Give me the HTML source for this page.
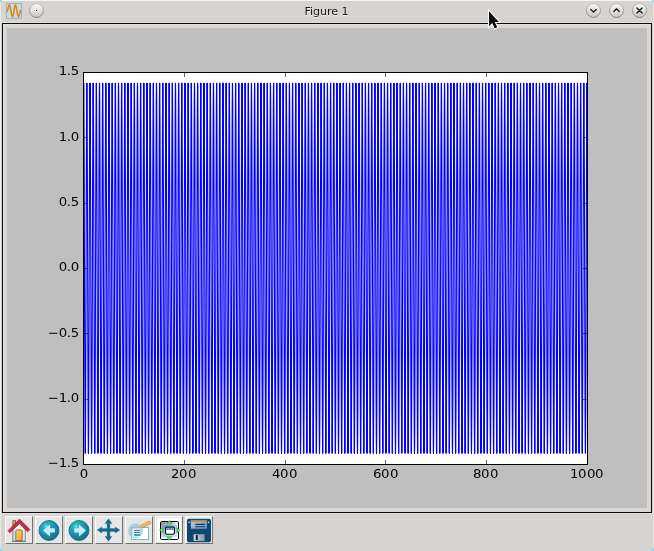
<!DOCTYPE html>
<html><head><meta charset="utf-8"><title>Figure 1</title>
<style>
html,body{margin:0;padding:0}
body{width:654px;height:551px;overflow:hidden;background:#d7d3d0;position:relative;font-family:"DejaVu Sans","Liberation Sans",sans-serif}
.abs{position:absolute}
#title{left:0;top:0;width:654px;height:23px;text-align:center;font-size:10.67px;line-height:23px;color:#1a1a1a;text-shadow:0 1px 0 #f4f3f2}
#frame{left:2px;top:23px;width:648px;height:488px;border:1px solid #0c0a0a;background:#d9d6d3}
#canvas{left:7px;top:28px;width:640px;height:480px;background:#bfbfbf}
.btn{position:absolute;top:516px;width:26px;height:26px;background:#e6e6e6;border-top:1px solid #fff;border-left:1px solid #fff;border-right:1px solid #747270;border-bottom:1px solid #747270}
svg{position:absolute;left:0;top:0;will-change:transform;transform:translateZ(0)}
svg text{font-family:"DejaVu Sans","Liberation Sans",sans-serif;font-size:13.33px;fill:#000}
</style></head><body>
<div class="abs" style="left:0;top:0;width:654px;height:1px;background:#f6f5f4"></div>
<div class="abs" style="left:0;top:0;width:1px;height:551px;background:#eceae8"></div>
<div class="abs" style="left:653px;top:0;width:1px;height:551px;background:#e8e5e3"></div>
<div class="abs" style="left:0;top:22px;width:654px;height:1px;background:#e2dfdd"></div>
<div id="frame" class="abs"></div>
<div class="abs" style="left:3px;top:24px;width:648px;height:1px;background:#e3e1df"></div>
<div class="abs" style="left:3px;top:24px;width:1px;height:488px;background:#e3e1df"></div>
<div id="canvas" class="abs"></div>
<div class="abs" style="left:0;top:513px;width:654px;height:1px;background:#e2dfdd"></div>
<div class="btn" style="left:5px"></div>
<div class="btn" style="left:35px"></div>
<div class="btn" style="left:65px"></div>
<div class="btn" style="left:95px"></div>
<div class="btn" style="left:125px"></div>
<div class="btn" style="left:155px"></div>
<div class="btn" style="left:185px"></div>
<svg width="654" height="551" viewBox="0 0 654 551">
<defs>
<clipPath id="axclip"><rect x="83.5" y="72.5" width="504" height="392"/></clipPath>
<linearGradient id="bg1" x1="0" y1="0" x2="0" y2="1"><stop offset="0" stop-color="#faf9f8"/><stop offset="0.5" stop-color="#e4e2e0"/><stop offset="1" stop-color="#c6c3c0"/></linearGradient>
<linearGradient id="bg2" x1="0" y1="0" x2="0" y2="1"><stop offset="0" stop-color="#bcb9b6"/><stop offset="1" stop-color="#7c7976"/></linearGradient>
</defs>
<!-- axes -->
<rect x="83.5" y="72.5" width="504" height="392" fill="#fff"/>
<g clip-path="url(#axclip)" style="isolation:isolate" fill="none" stroke="#0000ff" stroke-width="1.11" stroke-linecap="round" stroke-linejoin="round"><path d="M83.68 83.3L83.80 87.9L83.91 101.6L84.02 123.6L84.14 152.9L84.25 187.9L84.36 227.0L84.48 268.2L84.59 309.3L84.70 348.4L84.82 383.4L84.93 412.7L85.04 434.7L85.15 448.4L85.27 453.0M86.85 83.3L86.96 87.9L87.08 101.6L87.19 123.6L87.30 152.9L87.42 187.9L87.53 227.0L87.64 268.2L87.75 309.3L87.87 348.4L87.98 383.4L88.09 412.7L88.21 434.7L88.32 448.4L88.43 453.0M90.02 83.3L90.13 87.9L90.24 101.6L90.35 123.6L90.47 152.9L90.58 187.9L90.69 227.0L90.81 268.1L90.92 309.3L91.03 348.4L91.15 383.4L91.26 412.7L91.37 434.7L91.49 448.4L91.60 453.0M93.18 83.3L93.29 87.9L93.41 101.6L93.52 123.6L93.63 152.9L93.75 187.9L93.86 227.0L93.97 268.2L94.09 309.3L94.20 348.4L94.31 383.4L94.42 412.7L94.54 434.7L94.65 448.4L94.76 453.0M96.35 83.3L96.46 87.9L96.57 101.6L96.69 123.6L96.80 152.9L96.91 187.9L97.02 227.0L97.14 268.1L97.25 309.3L97.36 348.4L97.48 383.4L97.59 412.7L97.70 434.7L97.82 448.4L97.93 453.0M99.51 83.3L99.63 87.9L99.74 101.6L99.85 123.6L99.96 152.9L100.08 187.9L100.19 227.0L100.30 268.2L100.42 309.3L100.53 348.4L100.64 383.4L100.76 412.7L100.87 434.7L100.98 448.4L101.09 453.0M102.68 83.3L102.79 87.9L102.90 101.6L103.02 123.6L103.13 152.9L103.24 187.9L103.36 227.0L103.47 268.2L103.58 309.3L103.69 348.4L103.81 383.4L103.92 412.7L104.03 434.7L104.15 448.4L104.26 453.0M105.84 83.3L105.96 87.9L106.07 101.6L106.18 123.6L106.30 152.9L106.41 187.9L106.52 227.0L106.63 268.1L106.75 309.3L106.86 348.4L106.97 383.4L107.09 412.7L107.20 434.7L107.31 448.4L107.43 453.0M109.01 83.3L109.12 87.9L109.23 101.6L109.35 123.6L109.46 152.9L109.57 187.9L109.69 227.0L109.80 268.2L109.91 309.3L110.03 348.4L110.14 383.4L110.25 412.7L110.37 434.7L110.48 448.4L110.59 453.0M112.17 83.3L112.29 87.9L112.40 101.6L112.51 123.6L112.63 152.9L112.74 187.9L112.85 227.0L112.97 268.1L113.08 309.3L113.19 348.4L113.30 383.4L113.42 412.7L113.53 434.7L113.64 448.4L113.76 453.0M115.34 83.3L115.45 87.9L115.57 101.6L115.68 123.6L115.79 152.9L115.90 187.9L116.02 227.0L116.13 268.2L116.24 309.3L116.36 348.4L116.47 383.4L116.58 412.7L116.70 434.7L116.81 448.4L116.92 453.0M118.50 83.3L118.62 87.9L118.73 101.6L118.84 123.6L118.96 152.9L119.07 187.9L119.18 227.0L119.30 268.2L119.41 309.3L119.52 348.4L119.64 383.4L119.75 412.7L119.86 434.7L119.97 448.4L120.09 453.0M121.67 83.3L121.78 87.9L121.90 101.6L122.01 123.6L122.12 152.9L122.24 187.9L122.35 227.0L122.46 268.2L122.57 309.3L122.69 348.4L122.80 383.4L122.91 412.7L123.03 434.7L123.14 448.4L123.25 453.0M124.84 83.3L124.95 87.9L125.06 101.6L125.18 123.6L125.29 152.9L125.40 187.9L125.51 227.0L125.63 268.2L125.74 309.3L125.85 348.4L125.97 383.4L126.08 412.7L126.19 434.7L126.31 448.4L126.42 453.0M128.00 83.3L128.11 87.9L128.23 101.6L128.34 123.6L128.45 152.9L128.57 187.9L128.68 227.0L128.79 268.1L128.91 309.3L129.02 348.4L129.13 383.4L129.25 412.7L129.36 434.7L129.47 448.4L129.58 453.0M131.17 83.3L131.28 87.9L131.39 101.6L131.51 123.6L131.62 152.9L131.73 187.9L131.85 227.0L131.96 268.1L132.07 309.3L132.18 348.4L132.30 383.4L132.41 412.7L132.52 434.7L132.64 448.4L132.75 453.0M134.33 83.3L134.45 87.9L134.56 101.6L134.67 123.6L134.78 152.9L134.90 187.9L135.01 227.0L135.12 268.1L135.24 309.3L135.35 348.4L135.46 383.4L135.58 412.7L135.69 434.7L135.80 448.4L135.92 453.0M137.50 83.3L137.61 87.9L137.72 101.6L137.84 123.6L137.95 152.9L138.06 187.9L138.18 227.0L138.29 268.1L138.40 309.3L138.52 348.4L138.63 383.4L138.74 412.7L138.85 434.7L138.97 448.4L139.08 453.0M140.66 83.3L140.78 87.9L140.89 101.6L141.00 123.6L141.12 152.9L141.23 187.9L141.34 227.0L141.45 268.1L141.57 309.3L141.68 348.4L141.79 383.4L141.91 412.7L142.02 434.7L142.13 448.4L142.25 453.0M143.83 83.3L143.94 87.9L144.06 101.6L144.17 123.6L144.28 152.9L144.39 187.9L144.51 227.0L144.62 268.1L144.73 309.3L144.85 348.4L144.96 383.4L145.07 412.7L145.19 434.7L145.30 448.4L145.41 453.0M146.99 83.3L147.11 87.9L147.22 101.6L147.33 123.6L147.45 152.9L147.56 187.9L147.67 227.0L147.79 268.1L147.90 309.3L148.01 348.4L148.13 383.4L148.24 412.7L148.35 434.7L148.46 448.4L148.58 453.0M150.16 83.3L150.27 87.9L150.39 101.6L150.50 123.6L150.61 152.9L150.73 187.9L150.84 227.0L150.95 268.1L151.06 309.3L151.18 348.4L151.29 383.4L151.40 412.7L151.52 434.7L151.63 448.4L151.74 453.0M153.33 83.3L153.44 87.9L153.55 101.6L153.66 123.6L153.78 152.9L153.89 187.9L154.00 227.0L154.12 268.1L154.23 309.3L154.34 348.4L154.46 383.4L154.57 412.7L154.68 434.7L154.80 448.4L154.91 453.0M156.49 83.3L156.60 87.9L156.72 101.6L156.83 123.6L156.94 152.9L157.06 187.9L157.17 227.0L157.28 268.1L157.40 309.3L157.51 348.4L157.62 383.4L157.73 412.7L157.85 434.7L157.96 448.4L158.07 453.0M159.66 83.3L159.77 87.9L159.88 101.6L160.00 123.6L160.11 152.9L160.22 187.9L160.33 227.0L160.45 268.1L160.56 309.3L160.67 348.4L160.79 383.4L160.90 412.7L161.01 434.7L161.13 448.4L161.24 453.0M162.82 83.3L162.94 87.9L163.05 101.6L163.16 123.6L163.27 152.9L163.39 187.9L163.50 227.0L163.61 268.1L163.73 309.3L163.84 348.4L163.95 383.4L164.07 412.7L164.18 434.7L164.29 448.4L164.40 453.0M165.99 83.3L166.10 87.9L166.21 101.6L166.33 123.6L166.44 152.9L166.55 187.9L166.67 227.0L166.78 268.1L166.89 309.3L167.00 348.4L167.12 383.4L167.23 412.7L167.34 434.7L167.46 448.4L167.57 453.0M169.15 83.3L169.27 87.9L169.38 101.6L169.49 123.6L169.61 152.9L169.72 187.9L169.83 227.0L169.94 268.2L170.06 309.3L170.17 348.4L170.28 383.4L170.40 412.7L170.51 434.7L170.62 448.4L170.74 453.0M172.32 83.3L172.43 87.9L172.54 101.6L172.66 123.6L172.77 152.9L172.88 187.9L173.00 227.0L173.11 268.1L173.22 309.3L173.34 348.4L173.45 383.4L173.56 412.7L173.68 434.7L173.79 448.4L173.90 453.0M175.48 83.3L175.60 87.9L175.71 101.6L175.82 123.6L175.94 152.9L176.05 187.9L176.16 227.0L176.28 268.1L176.39 309.3L176.50 348.4L176.61 383.4L176.73 412.7L176.84 434.7L176.95 448.4L177.07 453.0M178.65 83.3L178.76 87.9L178.88 101.6L178.99 123.6L179.10 152.9L179.21 187.9L179.33 227.0L179.44 268.1L179.55 309.3L179.67 348.4L179.78 383.4L179.89 412.7L180.01 434.7L180.12 448.4L180.23 453.0M181.81 83.3L181.93 87.9L182.04 101.6L182.15 123.6L182.27 152.9L182.38 187.9L182.49 227.0L182.61 268.1L182.72 309.3L182.83 348.4L182.95 383.4L183.06 412.7L183.17 434.7L183.28 448.4L183.40 453.0M184.98 83.3L185.09 87.9L185.21 101.6L185.32 123.6L185.43 152.9L185.55 187.9L185.66 227.0L185.77 268.2L185.88 309.3L186.00 348.4L186.11 383.4L186.22 412.7L186.34 434.7L186.45 448.4L186.56 453.0M188.15 83.3L188.26 87.9L188.37 101.6L188.49 123.6L188.60 152.9L188.71 187.9L188.82 227.0L188.94 268.2L189.05 309.3L189.16 348.4L189.28 383.4L189.39 412.7L189.50 434.7L189.62 448.4L189.73 453.0M191.31 83.3L191.42 87.9L191.54 101.6L191.65 123.6L191.76 152.9L191.88 187.9L191.99 227.0L192.10 268.1L192.22 309.3L192.33 348.4L192.44 383.4L192.56 412.7L192.67 434.7L192.78 448.4L192.89 453.0M194.48 83.3L194.59 87.9L194.70 101.6L194.82 123.6L194.93 152.9L195.04 187.9L195.16 227.0L195.27 268.1L195.38 309.3L195.49 348.4L195.61 383.4L195.72 412.7L195.83 434.7L195.95 448.4L196.06 453.0M197.64 83.3L197.76 87.9L197.87 101.6L197.98 123.6L198.09 152.9L198.21 187.9L198.32 227.0L198.43 268.1L198.55 309.3L198.66 348.4L198.77 383.4L198.89 412.7L199.00 434.7L199.11 448.4L199.23 453.0M200.81 83.3L200.92 87.9L201.03 101.6L201.15 123.6L201.26 152.9L201.37 187.9L201.49 227.0L201.60 268.1L201.71 309.3L201.83 348.4L201.94 383.4L202.05 412.7L202.16 434.7L202.28 448.4L202.39 453.0M203.97 83.3L204.09 87.9L204.20 101.6L204.31 123.6L204.43 152.9L204.54 187.9L204.65 227.0L204.76 268.1L204.88 309.3L204.99 348.4L205.10 383.4L205.22 412.7L205.33 434.7L205.44 448.4L205.56 453.0M207.14 83.3L207.25 87.9L207.37 101.6L207.48 123.6L207.59 152.9L207.70 187.9L207.82 227.0L207.93 268.1L208.04 309.3L208.16 348.4L208.27 383.4L208.38 412.7L208.50 434.7L208.61 448.4L208.72 453.0M210.30 83.3L210.42 87.9L210.53 101.6L210.64 123.6L210.76 152.9L210.87 187.9L210.98 227.0L211.10 268.2L211.21 309.3L211.32 348.4L211.44 383.4L211.55 412.7L211.66 434.7L211.77 448.4L211.89 453.0M213.47 83.3L213.58 87.9L213.70 101.6L213.81 123.6L213.92 152.9L214.04 187.9L214.15 227.0L214.26 268.1L214.37 309.3L214.49 348.4L214.60 383.4L214.71 412.7L214.83 434.7L214.94 448.4L215.05 453.0M216.64 83.3L216.75 87.9L216.86 101.6L216.97 123.6L217.09 152.9L217.20 187.9L217.31 227.0L217.43 268.1L217.54 309.3L217.65 348.4L217.77 383.4L217.88 412.7L217.99 434.7L218.11 448.4L218.22 453.0M219.80 83.3L219.91 87.9L220.03 101.6L220.14 123.6L220.25 152.9L220.37 187.9L220.48 227.0L220.59 268.1L220.71 309.3L220.82 348.4L220.93 383.4L221.04 412.7L221.16 434.7L221.27 448.4L221.38 453.0M222.97 83.3L223.08 87.9L223.19 101.6L223.31 123.6L223.42 152.9L223.53 187.9L223.64 227.0L223.76 268.1L223.87 309.3L223.98 348.4L224.10 383.4L224.21 412.7L224.32 434.7L224.44 448.4L224.55 453.0M226.13 83.3L226.25 87.9L226.36 101.6L226.47 123.6L226.58 152.9L226.70 187.9L226.81 227.0L226.92 268.1L227.04 309.3L227.15 348.4L227.26 383.4L227.38 412.7L227.49 434.7L227.60 448.4L227.71 453.0M229.30 83.3L229.41 87.9L229.52 101.6L229.64 123.6L229.75 152.9L229.86 187.9L229.98 227.0L230.09 268.1L230.20 309.3L230.31 348.4L230.43 383.4L230.54 412.7L230.65 434.7L230.77 448.4L230.88 453.0M232.46 83.3L232.58 87.9L232.69 101.6L232.80 123.6L232.92 152.9L233.03 187.9L233.14 227.0L233.25 268.1L233.37 309.3L233.48 348.4L233.59 383.4L233.71 412.7L233.82 434.7L233.93 448.4L234.05 453.0M235.63 83.3L235.74 87.9L235.85 101.6L235.97 123.6L236.08 152.9L236.19 187.9L236.31 227.0L236.42 268.1L236.53 309.3L236.65 348.4L236.76 383.4L236.87 412.7L236.99 434.7L237.10 448.4L237.21 453.0M238.79 83.3L238.91 87.9L239.02 101.6L239.13 123.6L239.25 152.9L239.36 187.9L239.47 227.0L239.59 268.1L239.70 309.3L239.81 348.4L239.92 383.4L240.04 412.7L240.15 434.7L240.26 448.4L240.38 453.0M241.96 83.3L242.07 87.9L242.19 101.6L242.30 123.6L242.41 152.9L242.52 187.9L242.64 227.0L242.75 268.1L242.86 309.3L242.98 348.4L243.09 383.4L243.20 412.7L243.32 434.7L243.43 448.4L243.54 453.0M245.12 83.3L245.24 87.9L245.35 101.6L245.46 123.6L245.58 152.9L245.69 187.9L245.80 227.0L245.92 268.1L246.03 309.3L246.14 348.4L246.26 383.4L246.37 412.7L246.48 434.7L246.59 448.4L246.71 453.0M248.29 83.3L248.40 87.9L248.52 101.6L248.63 123.6L248.74 152.9L248.86 187.9L248.97 227.0L249.08 268.1L249.19 309.3L249.31 348.4L249.42 383.4L249.53 412.7L249.65 434.7L249.76 448.4L249.87 453.0M251.46 83.3L251.57 87.9L251.68 101.6L251.80 123.6L251.91 152.9L252.02 187.9L252.13 227.0L252.25 268.2L252.36 309.3L252.47 348.4L252.59 383.4L252.70 412.7L252.81 434.7L252.93 448.4L253.04 453.0M254.62 83.3L254.73 87.9L254.85 101.6L254.96 123.6L255.07 152.9L255.19 187.9L255.30 227.0L255.41 268.1L255.53 309.3L255.64 348.4L255.75 383.4L255.87 412.7L255.98 434.7L256.09 448.4L256.20 453.0M257.79 83.3L257.90 87.9L258.01 101.6L258.13 123.6L258.24 152.9L258.35 187.9L258.47 227.0L258.58 268.2L258.69 309.3L258.80 348.4L258.92 383.4L259.03 412.7L259.14 434.7L259.26 448.4L259.37 453.0M260.95 83.3L261.07 87.9L261.18 101.6L261.29 123.6L261.40 152.9L261.52 187.9L261.63 227.0L261.74 268.2L261.86 309.3L261.97 348.4L262.08 383.4L262.20 412.7L262.31 434.7L262.42 448.4L262.54 453.0M264.12 83.3L264.23 87.9L264.34 101.6L264.46 123.6L264.57 152.9L264.68 187.9L264.80 227.0L264.91 268.1L265.02 309.3L265.14 348.4L265.25 383.4L265.36 412.7L265.47 434.7L265.59 448.4L265.70 453.0M267.28 83.3L267.40 87.9L267.51 101.6L267.62 123.6L267.74 152.9L267.85 187.9L267.96 227.0L268.07 268.2L268.19 309.3L268.30 348.4L268.41 383.4L268.53 412.7L268.64 434.7L268.75 448.4L268.87 453.0M270.45 83.3L270.56 87.9L270.68 101.6L270.79 123.6L270.90 152.9L271.01 187.9L271.13 227.0L271.24 268.2L271.35 309.3L271.47 348.4L271.58 383.4L271.69 412.7L271.81 434.7L271.92 448.4L272.03 453.0M273.61 83.3L273.73 87.9L273.84 101.6L273.95 123.6L274.07 152.9L274.18 187.9L274.29 227.0L274.41 268.2L274.52 309.3L274.63 348.4L274.75 383.4L274.86 412.7L274.97 434.7L275.08 448.4L275.20 453.0M276.78 83.3L276.89 87.9L277.01 101.6L277.12 123.6L277.23 152.9L277.35 187.9L277.46 227.0L277.57 268.2L277.68 309.3L277.80 348.4L277.91 383.4L278.02 412.7L278.14 434.7L278.25 448.4L278.36 453.0M279.95 83.3L280.06 87.9L280.17 101.6L280.28 123.6L280.40 152.9L280.51 187.9L280.62 227.0L280.74 268.2L280.85 309.3L280.96 348.4L281.08 383.4L281.19 412.7L281.30 434.7L281.42 448.4L281.53 453.0M283.11 83.3L283.22 87.9L283.34 101.6L283.45 123.6L283.56 152.9L283.68 187.9L283.79 227.0L283.90 268.2L284.02 309.3L284.13 348.4L284.24 383.4L284.35 412.7L284.47 434.7L284.58 448.4L284.69 453.0M286.28 83.3L286.39 87.9L286.50 101.6L286.62 123.6L286.73 152.9L286.84 187.9L286.95 227.0L287.07 268.2L287.18 309.3L287.29 348.4L287.41 383.4L287.52 412.7L287.63 434.7L287.75 448.4L287.86 453.0M289.44 83.3L289.56 87.9L289.67 101.6L289.78 123.6L289.89 152.9L290.01 187.9L290.12 227.0L290.23 268.2L290.35 309.3L290.46 348.4L290.57 383.4L290.69 412.7L290.80 434.7L290.91 448.4L291.02 453.0M292.61 83.3L292.72 87.9L292.83 101.6L292.95 123.6L293.06 152.9L293.17 187.9L293.29 227.0L293.40 268.2L293.51 309.3L293.62 348.4L293.74 383.4L293.85 412.7L293.96 434.7L294.08 448.4L294.19 453.0M295.77 83.3L295.89 87.9L296.00 101.6L296.11 123.6L296.23 152.9L296.34 187.9L296.45 227.0L296.56 268.2L296.68 309.3L296.79 348.4L296.90 383.4L297.02 412.7L297.13 434.7L297.24 448.4L297.36 453.0M298.94 83.3L299.05 87.9L299.16 101.6L299.28 123.6L299.39 152.9L299.50 187.9L299.62 227.0L299.73 268.1L299.84 309.3L299.96 348.4L300.07 383.4L300.18 412.7L300.30 434.7L300.41 448.4L300.52 453.0M302.10 83.3L302.22 87.9L302.33 101.6L302.44 123.6L302.56 152.9L302.67 187.9L302.78 227.0L302.90 268.2L303.01 309.3L303.12 348.4L303.23 383.4L303.35 412.7L303.46 434.7L303.57 448.4L303.69 453.0M305.27 83.3L305.38 87.9L305.50 101.6L305.61 123.6L305.72 152.9L305.83 187.9L305.95 227.0L306.06 268.1L306.17 309.3L306.29 348.4L306.40 383.4L306.51 412.7L306.63 434.7L306.74 448.4L306.85 453.0M308.44 83.3L308.55 87.9L308.66 101.6L308.77 123.6L308.89 152.9L309.00 187.9L309.11 227.0L309.23 268.1L309.34 309.3L309.45 348.4L309.57 383.4L309.68 412.7L309.79 434.7L309.90 448.4L310.02 453.0M311.60 83.3L311.71 87.9L311.83 101.6L311.94 123.6L312.05 152.9L312.17 187.9L312.28 227.0L312.39 268.1L312.50 309.3L312.62 348.4L312.73 383.4L312.84 412.7L312.96 434.7L313.07 448.4L313.18 453.0M314.77 83.3L314.88 87.9L314.99 101.6L315.11 123.6L315.22 152.9L315.33 187.9L315.44 227.0L315.56 268.2L315.67 309.3L315.78 348.4L315.90 383.4L316.01 412.7L316.12 434.7L316.24 448.4L316.35 453.0M317.93 83.3L318.04 87.9L318.16 101.6L318.27 123.6L318.38 152.9L318.50 187.9L318.61 227.0L318.72 268.2L318.84 309.3L318.95 348.4L319.06 383.4L319.18 412.7L319.29 434.7L319.40 448.4L319.51 453.0M321.10 83.3L321.21 87.9L321.32 101.6L321.44 123.6L321.55 152.9L321.66 187.9L321.78 227.0L321.89 268.1L322.00 309.3L322.11 348.4L322.23 383.4L322.34 412.7L322.45 434.7L322.57 448.4L322.68 453.0M324.26 83.3L324.38 87.9L324.49 101.6L324.60 123.6L324.71 152.9L324.83 187.9L324.94 227.0L325.05 268.2L325.17 309.3L325.28 348.4L325.39 383.4L325.51 412.7L325.62 434.7L325.73 448.4L325.85 453.0M327.43 83.3L327.54 87.9L327.65 101.6L327.77 123.6L327.88 152.9L327.99 187.9L328.11 227.0L328.22 268.2L328.33 309.3L328.45 348.4L328.56 383.4L328.67 412.7L328.78 434.7L328.90 448.4L329.01 453.0M330.59 83.3L330.71 87.9L330.82 101.6L330.93 123.6L331.05 152.9L331.16 187.9L331.27 227.0L331.38 268.1L331.50 309.3L331.61 348.4L331.72 383.4L331.84 412.7L331.95 434.7L332.06 448.4L332.18 453.0M333.76 83.3L333.87 87.9L333.99 101.6L334.10 123.6L334.21 152.9L334.32 187.9L334.44 227.0L334.55 268.2L334.66 309.3L334.78 348.4L334.89 383.4L335.00 412.7L335.12 434.7L335.23 448.4L335.34 453.0M336.92 83.3L337.04 87.9L337.15 101.6L337.26 123.6L337.38 152.9L337.49 187.9L337.60 227.0L337.72 268.2L337.83 309.3L337.94 348.4L338.06 383.4L338.17 412.7L338.28 434.7L338.39 448.4L338.51 453.0M340.09 83.3L340.20 87.9L340.32 101.6L340.43 123.6L340.54 152.9L340.66 187.9L340.77 227.0L340.88 268.2L340.99 309.3L341.11 348.4L341.22 383.4L341.33 412.7L341.45 434.7L341.56 448.4L341.67 453.0M343.26 83.3L343.37 87.9L343.48 101.6L343.59 123.6L343.71 152.9L343.82 187.9L343.93 227.0L344.05 268.1L344.16 309.3L344.27 348.4L344.39 383.4L344.50 412.7L344.61 434.7L344.73 448.4L344.84 453.0M346.42 83.3L346.53 87.9L346.65 101.6L346.76 123.6L346.87 152.9L346.99 187.9L347.10 227.0L347.21 268.1L347.33 309.3L347.44 348.4L347.55 383.4L347.66 412.7L347.78 434.7L347.89 448.4L348.00 453.0M349.59 83.3L349.70 87.9L349.81 101.6L349.93 123.6L350.04 152.9L350.15 187.9L350.26 227.0L350.38 268.1L350.49 309.3L350.60 348.4L350.72 383.4L350.83 412.7L350.94 434.7L351.06 448.4L351.17 453.0M352.75 83.3L352.87 87.9L352.98 101.6L353.09 123.6L353.20 152.9L353.32 187.9L353.43 227.0L353.54 268.2L353.66 309.3L353.77 348.4L353.88 383.4L354.00 412.7L354.11 434.7L354.22 448.4L354.33 453.0M355.92 83.3L356.03 87.9L356.14 101.6L356.26 123.6L356.37 152.9L356.48 187.9L356.60 227.0L356.71 268.1L356.82 309.3L356.93 348.4L357.05 383.4L357.16 412.7L357.27 434.7L357.39 448.4L357.50 453.0M359.08 83.3L359.20 87.9L359.31 101.6L359.42 123.6L359.54 152.9L359.65 187.9L359.76 227.0L359.87 268.1L359.99 309.3L360.10 348.4L360.21 383.4L360.33 412.7L360.44 434.7L360.55 448.4L360.67 453.0M362.25 83.3L362.36 87.9L362.47 101.6L362.59 123.6L362.70 152.9L362.81 187.9L362.93 227.0L363.04 268.1L363.15 309.3L363.27 348.4L363.38 383.4L363.49 412.7L363.61 434.7L363.72 448.4L363.83 453.0M365.41 83.3L365.53 87.9L365.64 101.6L365.75 123.6L365.87 152.9L365.98 187.9L366.09 227.0L366.21 268.1L366.32 309.3L366.43 348.4L366.54 383.4L366.66 412.7L366.77 434.7L366.88 448.4L367.00 453.0M368.58 83.3L368.69 87.9L368.81 101.6L368.92 123.6L369.03 152.9L369.14 187.9L369.26 227.0L369.37 268.2L369.48 309.3L369.60 348.4L369.71 383.4L369.82 412.7L369.94 434.7L370.05 448.4L370.16 453.0M371.75 83.3L371.86 87.9L371.97 101.6L372.08 123.6L372.20 152.9L372.31 187.9L372.42 227.0L372.54 268.1L372.65 309.3L372.76 348.4L372.88 383.4L372.99 412.7L373.10 434.7L373.21 448.4L373.33 453.0M374.91 83.3L375.02 87.9L375.14 101.6L375.25 123.6L375.36 152.9L375.48 187.9L375.59 227.0L375.70 268.1L375.81 309.3L375.93 348.4L376.04 383.4L376.15 412.7L376.27 434.7L376.38 448.4L376.49 453.0M378.08 83.3L378.19 87.9L378.30 101.6L378.42 123.6L378.53 152.9L378.64 187.9L378.75 227.0L378.87 268.2L378.98 309.3L379.09 348.4L379.21 383.4L379.32 412.7L379.43 434.7L379.55 448.4L379.66 453.0M381.24 83.3L381.35 87.9L381.47 101.6L381.58 123.6L381.69 152.9L381.81 187.9L381.92 227.0L382.03 268.1L382.15 309.3L382.26 348.4L382.37 383.4L382.49 412.7L382.60 434.7L382.71 448.4L382.82 453.0M384.41 83.3L384.52 87.9L384.63 101.6L384.75 123.6L384.86 152.9L384.97 187.9L385.09 227.0L385.20 268.2L385.31 309.3L385.42 348.4L385.54 383.4L385.65 412.7L385.76 434.7L385.88 448.4L385.99 453.0M387.57 83.3L387.69 87.9L387.80 101.6L387.91 123.6L388.02 152.9L388.14 187.9L388.25 227.0L388.36 268.1L388.48 309.3L388.59 348.4L388.70 383.4L388.82 412.7L388.93 434.7L389.04 448.4L389.16 453.0M390.74 83.3L390.85 87.9L390.96 101.6L391.08 123.6L391.19 152.9L391.30 187.9L391.42 227.0L391.53 268.2L391.64 309.3L391.76 348.4L391.87 383.4L391.98 412.7L392.09 434.7L392.21 448.4L392.32 453.0M393.90 83.3L394.02 87.9L394.13 101.6L394.24 123.6L394.36 152.9L394.47 187.9L394.58 227.0L394.69 268.1L394.81 309.3L394.92 348.4L395.03 383.4L395.15 412.7L395.26 434.7L395.37 448.4L395.49 453.0M397.07 83.3L397.18 87.9L397.30 101.6L397.41 123.6L397.52 152.9L397.63 187.9L397.75 227.0L397.86 268.1L397.97 309.3L398.09 348.4L398.20 383.4L398.31 412.7L398.43 434.7L398.54 448.4L398.65 453.0M400.23 83.3L400.35 87.9L400.46 101.6L400.57 123.6L400.69 152.9L400.80 187.9L400.91 227.0L401.03 268.1L401.14 309.3L401.25 348.4L401.37 383.4L401.48 412.7L401.59 434.7L401.70 448.4L401.82 453.0M403.40 83.3L403.51 87.9L403.63 101.6L403.74 123.6L403.85 152.9L403.97 187.9L404.08 227.0L404.19 268.1L404.30 309.3L404.42 348.4L404.53 383.4L404.64 412.7L404.76 434.7L404.87 448.4L404.98 453.0M406.57 83.3L406.68 87.9L406.79 101.6L406.90 123.6L407.02 152.9L407.13 187.9L407.24 227.0L407.36 268.2L407.47 309.3L407.58 348.4L407.70 383.4L407.81 412.7L407.92 434.7L408.04 448.4L408.15 453.0M409.73 83.3L409.84 87.9L409.96 101.6L410.07 123.6L410.18 152.9L410.30 187.9L410.41 227.0L410.52 268.1L410.64 309.3L410.75 348.4L410.86 383.4L410.97 412.7L411.09 434.7L411.20 448.4L411.31 453.0M412.90 83.3L413.01 87.9L413.12 101.6L413.24 123.6L413.35 152.9L413.46 187.9L413.57 227.0L413.69 268.2L413.80 309.3L413.91 348.4L414.03 383.4L414.14 412.7L414.25 434.7L414.37 448.4L414.48 453.0M416.06 83.3L416.18 87.9L416.29 101.6L416.40 123.6L416.51 152.9L416.63 187.9L416.74 227.0L416.85 268.1L416.97 309.3L417.08 348.4L417.19 383.4L417.31 412.7L417.42 434.7L417.53 448.4L417.64 453.0M419.23 83.3L419.34 87.9L419.45 101.6L419.57 123.6L419.68 152.9L419.79 187.9L419.91 227.0L420.02 268.1L420.13 309.3L420.24 348.4L420.36 383.4L420.47 412.7L420.58 434.7L420.70 448.4L420.81 453.0M422.39 83.3L422.51 87.9L422.62 101.6L422.73 123.6L422.85 152.9L422.96 187.9L423.07 227.0L423.18 268.1L423.30 309.3L423.41 348.4L423.52 383.4L423.64 412.7L423.75 434.7L423.86 448.4L423.98 453.0M425.56 83.3L425.67 87.9L425.78 101.6L425.90 123.6L426.01 152.9L426.12 187.9L426.24 227.0L426.35 268.1L426.46 309.3L426.58 348.4L426.69 383.4L426.80 412.7L426.92 434.7L427.03 448.4L427.14 453.0M428.72 83.3L428.84 87.9L428.95 101.6L429.06 123.6L429.18 152.9L429.29 187.9L429.40 227.0L429.52 268.1L429.63 309.3L429.74 348.4L429.85 383.4L429.97 412.7L430.08 434.7L430.19 448.4L430.31 453.0M431.89 83.3L432.00 87.9L432.12 101.6L432.23 123.6L432.34 152.9L432.45 187.9L432.57 227.0L432.68 268.1L432.79 309.3L432.91 348.4L433.02 383.4L433.13 412.7L433.25 434.7L433.36 448.4L433.47 453.0M435.06 83.3L435.17 87.9L435.28 101.6L435.39 123.6L435.51 152.9L435.62 187.9L435.73 227.0L435.85 268.1L435.96 309.3L436.07 348.4L436.19 383.4L436.30 412.7L436.41 434.7L436.52 448.4L436.64 453.0M438.22 83.3L438.33 87.9L438.45 101.6L438.56 123.6L438.67 152.9L438.79 187.9L438.90 227.0L439.01 268.1L439.12 309.3L439.24 348.4L439.35 383.4L439.46 412.7L439.58 434.7L439.69 448.4L439.80 453.0M441.39 83.3L441.50 87.9L441.61 101.6L441.73 123.6L441.84 152.9L441.95 187.9L442.06 227.0L442.18 268.1L442.29 309.3L442.40 348.4L442.52 383.4L442.63 412.7L442.74 434.7L442.86 448.4L442.97 453.0M444.55 83.3L444.66 87.9L444.78 101.6L444.89 123.6L445.00 152.9L445.12 187.9L445.23 227.0L445.34 268.2L445.46 309.3L445.57 348.4L445.68 383.4L445.80 412.7L445.91 434.7L446.02 448.4L446.13 453.0M447.72 83.3L447.83 87.9L447.94 101.6L448.06 123.6L448.17 152.9L448.28 187.9L448.40 227.0L448.51 268.1L448.62 309.3L448.73 348.4L448.85 383.4L448.96 412.7L449.07 434.7L449.19 448.4L449.30 453.0M450.88 83.3L451.00 87.9L451.11 101.6L451.22 123.6L451.33 152.9L451.45 187.9L451.56 227.0L451.67 268.1L451.79 309.3L451.90 348.4L452.01 383.4L452.13 412.7L452.24 434.7L452.35 448.4L452.47 453.0M454.05 83.3L454.16 87.9L454.27 101.6L454.39 123.6L454.50 152.9L454.61 187.9L454.73 227.0L454.84 268.1L454.95 309.3L455.07 348.4L455.18 383.4L455.29 412.7L455.40 434.7L455.52 448.4L455.63 453.0M457.21 83.3L457.33 87.9L457.44 101.6L457.55 123.6L457.67 152.9L457.78 187.9L457.89 227.0L458.00 268.2L458.12 309.3L458.23 348.4L458.34 383.4L458.46 412.7L458.57 434.7L458.68 448.4L458.80 453.0M460.38 83.3L460.49 87.9L460.61 101.6L460.72 123.6L460.83 152.9L460.94 187.9L461.06 227.0L461.17 268.1L461.28 309.3L461.40 348.4L461.51 383.4L461.62 412.7L461.74 434.7L461.85 448.4L461.96 453.0M463.54 83.3L463.66 87.9L463.77 101.6L463.88 123.6L464.00 152.9L464.11 187.9L464.22 227.0L464.34 268.1L464.45 309.3L464.56 348.4L464.68 383.4L464.79 412.7L464.90 434.7L465.01 448.4L465.13 453.0M466.71 83.3L466.82 87.9L466.94 101.6L467.05 123.6L467.16 152.9L467.28 187.9L467.39 227.0L467.50 268.1L467.61 309.3L467.73 348.4L467.84 383.4L467.95 412.7L468.07 434.7L468.18 448.4L468.29 453.0M469.88 83.3L469.99 87.9L470.10 101.6L470.21 123.6L470.33 152.9L470.44 187.9L470.55 227.0L470.67 268.1L470.78 309.3L470.89 348.4L471.01 383.4L471.12 412.7L471.23 434.7L471.35 448.4L471.46 453.0M473.04 83.3L473.15 87.9L473.27 101.6L473.38 123.6L473.49 152.9L473.61 187.9L473.72 227.0L473.83 268.2L473.95 309.3L474.06 348.4L474.17 383.4L474.28 412.7L474.40 434.7L474.51 448.4L474.62 453.0M476.21 83.3L476.32 87.9L476.43 101.6L476.55 123.6L476.66 152.9L476.77 187.9L476.88 227.0L477.00 268.1L477.11 309.3L477.22 348.4L477.34 383.4L477.45 412.7L477.56 434.7L477.68 448.4L477.79 453.0M479.37 83.3L479.49 87.9L479.60 101.6L479.71 123.6L479.82 152.9L479.94 187.9L480.05 227.0L480.16 268.1L480.28 309.3L480.39 348.4L480.50 383.4L480.62 412.7L480.73 434.7L480.84 448.4L480.95 453.0M482.54 83.3L482.65 87.9L482.76 101.6L482.88 123.6L482.99 152.9L483.10 187.9L483.22 227.0L483.33 268.1L483.44 309.3L483.55 348.4L483.67 383.4L483.78 412.7L483.89 434.7L484.01 448.4L484.12 453.0M485.70 83.3L485.82 87.9L485.93 101.6L486.04 123.6L486.16 152.9L486.27 187.9L486.38 227.0L486.49 268.1L486.61 309.3L486.72 348.4L486.83 383.4L486.95 412.7L487.06 434.7L487.17 448.4L487.29 453.0M488.87 83.3L488.98 87.9L489.09 101.6L489.21 123.6L489.32 152.9L489.43 187.9L489.55 227.0L489.66 268.2L489.77 309.3L489.89 348.4L490.00 383.4L490.11 412.7L490.23 434.7L490.34 448.4L490.45 453.0M492.03 83.3L492.15 87.9L492.26 101.6L492.37 123.6L492.49 152.9L492.60 187.9L492.71 227.0L492.83 268.1L492.94 309.3L493.05 348.4L493.16 383.4L493.28 412.7L493.39 434.7L493.50 448.4L493.62 453.0M495.20 83.3L495.31 87.9L495.43 101.6L495.54 123.6L495.65 152.9L495.76 187.9L495.88 227.0L495.99 268.1L496.10 309.3L496.22 348.4L496.33 383.4L496.44 412.7L496.56 434.7L496.67 448.4L496.78 453.0M498.37 83.3L498.48 87.9L498.59 101.6L498.70 123.6L498.82 152.9L498.93 187.9L499.04 227.0L499.16 268.1L499.27 309.3L499.38 348.4L499.50 383.4L499.61 412.7L499.72 434.7L499.83 448.4L499.95 453.0M501.53 83.3L501.64 87.9L501.76 101.6L501.87 123.6L501.98 152.9L502.10 187.9L502.21 227.0L502.32 268.2L502.43 309.3L502.55 348.4L502.66 383.4L502.77 412.7L502.89 434.7L503.00 448.4L503.11 453.0M504.70 83.3L504.81 87.9L504.92 101.6L505.04 123.6L505.15 152.9L505.26 187.9L505.37 227.0L505.49 268.2L505.60 309.3L505.71 348.4L505.83 383.4L505.94 412.7L506.05 434.7L506.17 448.4L506.28 453.0M507.86 83.3L507.97 87.9L508.09 101.6L508.20 123.6L508.31 152.9L508.43 187.9L508.54 227.0L508.65 268.1L508.77 309.3L508.88 348.4L508.99 383.4L509.11 412.7L509.22 434.7L509.33 448.4L509.44 453.0M511.03 83.3L511.14 87.9L511.25 101.6L511.37 123.6L511.48 152.9L511.59 187.9L511.71 227.0L511.82 268.2L511.93 309.3L512.04 348.4L512.16 383.4L512.27 412.7L512.38 434.7L512.50 448.4L512.61 453.0M514.19 83.3L514.31 87.9L514.42 101.6L514.53 123.6L514.64 152.9L514.76 187.9L514.87 227.0L514.98 268.1L515.10 309.3L515.21 348.4L515.32 383.4L515.44 412.7L515.55 434.7L515.66 448.4L515.78 453.0M517.36 83.3L517.47 87.9L517.58 101.6L517.70 123.6L517.81 152.9L517.92 187.9L518.04 227.0L518.15 268.2L518.26 309.3L518.38 348.4L518.49 383.4L518.60 412.7L518.71 434.7L518.83 448.4L518.94 453.0M520.52 83.3L520.64 87.9L520.75 101.6L520.86 123.6L520.98 152.9L521.09 187.9L521.20 227.0L521.31 268.1L521.43 309.3L521.54 348.4L521.65 383.4L521.77 412.7L521.88 434.7L521.99 448.4L522.11 453.0M523.69 83.3L523.80 87.9L523.92 101.6L524.03 123.6L524.14 152.9L524.25 187.9L524.37 227.0L524.48 268.2L524.59 309.3L524.71 348.4L524.82 383.4L524.93 412.7L525.05 434.7L525.16 448.4L525.27 453.0M526.85 83.3L526.97 87.9L527.08 101.6L527.19 123.6L527.31 152.9L527.42 187.9L527.53 227.0L527.65 268.1L527.76 309.3L527.87 348.4L527.99 383.4L528.10 412.7L528.21 434.7L528.32 448.4L528.44 453.0M530.02 83.3L530.13 87.9L530.25 101.6L530.36 123.6L530.47 152.9L530.59 187.9L530.70 227.0L530.81 268.1L530.92 309.3L531.04 348.4L531.15 383.4L531.26 412.7L531.38 434.7L531.49 448.4L531.60 453.0M533.19 83.3L533.30 87.9L533.41 101.6L533.52 123.6L533.64 152.9L533.75 187.9L533.86 227.0L533.98 268.2L534.09 309.3L534.20 348.4L534.32 383.4L534.43 412.7L534.54 434.7L534.66 448.4L534.77 453.0M536.35 83.3L536.46 87.9L536.58 101.6L536.69 123.6L536.80 152.9L536.92 187.9L537.03 227.0L537.14 268.1L537.26 309.3L537.37 348.4L537.48 383.4L537.59 412.7L537.71 434.7L537.82 448.4L537.93 453.0M539.52 83.3L539.63 87.9L539.74 101.6L539.86 123.6L539.97 152.9L540.08 187.9L540.19 227.0L540.31 268.2L540.42 309.3L540.53 348.4L540.65 383.4L540.76 412.7L540.87 434.7L540.99 448.4L541.10 453.0M542.68 83.3L542.80 87.9L542.91 101.6L543.02 123.6L543.13 152.9L543.25 187.9L543.36 227.0L543.47 268.1L543.59 309.3L543.70 348.4L543.81 383.4L543.93 412.7L544.04 434.7L544.15 448.4L544.26 453.0M545.85 83.3L545.96 87.9L546.07 101.6L546.19 123.6L546.30 152.9L546.41 187.9L546.53 227.0L546.64 268.1L546.75 309.3L546.86 348.4L546.98 383.4L547.09 412.7L547.20 434.7L547.32 448.4L547.43 453.0M549.01 83.3L549.13 87.9L549.24 101.6L549.35 123.6L549.47 152.9L549.58 187.9L549.69 227.0L549.80 268.1L549.92 309.3L550.03 348.4L550.14 383.4L550.26 412.7L550.37 434.7L550.48 448.4L550.60 453.0M552.18 83.3L552.29 87.9L552.40 101.6L552.52 123.6L552.63 152.9L552.74 187.9L552.86 227.0L552.97 268.1L553.08 309.3L553.20 348.4L553.31 383.4L553.42 412.7L553.54 434.7L553.65 448.4L553.76 453.0M555.34 83.3L555.46 87.9L555.57 101.6L555.68 123.6L555.80 152.9L555.91 187.9L556.02 227.0L556.14 268.1L556.25 309.3L556.36 348.4L556.47 383.4L556.59 412.7L556.70 434.7L556.81 448.4L556.93 453.0M558.51 83.3L558.62 87.9L558.74 101.6L558.85 123.6L558.96 152.9L559.07 187.9L559.19 227.0L559.30 268.1L559.41 309.3L559.53 348.4L559.64 383.4L559.75 412.7L559.87 434.7L559.98 448.4L560.09 453.0M561.68 83.3L561.79 87.9L561.90 101.6L562.01 123.6L562.13 152.9L562.24 187.9L562.35 227.0L562.47 268.2L562.58 309.3L562.69 348.4L562.81 383.4L562.92 412.7L563.03 434.7L563.14 448.4L563.26 453.0M564.84 83.3L564.95 87.9L565.07 101.6L565.18 123.6L565.29 152.9L565.41 187.9L565.52 227.0L565.63 268.1L565.74 309.3L565.86 348.4L565.97 383.4L566.08 412.7L566.20 434.7L566.31 448.4L566.42 453.0M568.01 83.3L568.12 87.9L568.23 101.6L568.35 123.6L568.46 152.9L568.57 187.9L568.68 227.0L568.80 268.1L568.91 309.3L569.02 348.4L569.14 383.4L569.25 412.7L569.36 434.7L569.48 448.4L569.59 453.0M571.17 83.3L571.28 87.9L571.40 101.6L571.51 123.6L571.62 152.9L571.74 187.9L571.85 227.0L571.96 268.1L572.08 309.3L572.19 348.4L572.30 383.4L572.42 412.7L572.53 434.7L572.64 448.4L572.75 453.0M574.34 83.3L574.45 87.9L574.56 101.6L574.68 123.6L574.79 152.9L574.90 187.9L575.02 227.0L575.13 268.1L575.24 309.3L575.35 348.4L575.47 383.4L575.58 412.7L575.69 434.7L575.81 448.4L575.92 453.0M577.50 83.3L577.62 87.9L577.73 101.6L577.84 123.6L577.95 152.9L578.07 187.9L578.18 227.0L578.29 268.2L578.41 309.3L578.52 348.4L578.63 383.4L578.75 412.7L578.86 434.7L578.97 448.4L579.09 453.0M580.67 83.3L580.78 87.9L580.89 101.6L581.01 123.6L581.12 152.9L581.23 187.9L581.35 227.0L581.46 268.1L581.57 309.3L581.69 348.4L581.80 383.4L581.91 412.7L582.02 434.7L582.14 448.4L582.25 453.0M583.83 83.3L583.95 87.9L584.06 101.6L584.17 123.6L584.29 152.9L584.40 187.9L584.51 227.0L584.62 268.1L584.74 309.3L584.85 348.4L584.96 383.4L585.08 412.7L585.19 434.7L585.30 448.4L585.42 453.0M587.00 83.3L587.11 87.9L587.23 101.6L587.34 123.6L587.45 152.9L587.56 187.9L587.68 227.0"/><path style="mix-blend-mode:plus-lighter" d="M83.35 123.6L83.46 101.6L83.57 87.9L83.68 83.3M85.27 453.0L85.38 448.4L85.49 434.7L85.61 412.7L85.72 383.4L85.83 348.4L85.95 309.3L86.06 268.2L86.17 227.0L86.28 187.9L86.40 152.9L86.51 123.6L86.62 101.6L86.74 87.9L86.85 83.3M88.43 453.0L88.55 448.4L88.66 434.7L88.77 412.7L88.88 383.4L89.00 348.4L89.11 309.3L89.22 268.1L89.34 227.0L89.45 187.9L89.56 152.9L89.68 123.6L89.79 101.6L89.90 87.9L90.02 83.3M91.60 453.0L91.71 448.4L91.82 434.7L91.94 412.7L92.05 383.4L92.16 348.4L92.28 309.3L92.39 268.2L92.50 227.0L92.62 187.9L92.73 152.9L92.84 123.6L92.95 101.6L93.07 87.9L93.18 83.3M94.76 453.0L94.88 448.4L94.99 434.7L95.10 412.7L95.22 383.4L95.33 348.4L95.44 309.3L95.56 268.2L95.67 227.0L95.78 187.9L95.89 152.9L96.01 123.6L96.12 101.6L96.23 87.9L96.35 83.3M97.93 453.0L98.04 448.4L98.16 434.7L98.27 412.7L98.38 383.4L98.49 348.4L98.61 309.3L98.72 268.1L98.83 227.0L98.95 187.9L99.06 152.9L99.17 123.6L99.29 101.6L99.40 87.9L99.51 83.3M101.09 453.0L101.21 448.4L101.32 434.7L101.43 412.7L101.55 383.4L101.66 348.4L101.77 309.3L101.89 268.2L102.00 227.0L102.11 187.9L102.23 152.9L102.34 123.6L102.45 101.6L102.56 87.9L102.68 83.3M104.26 453.0L104.37 448.4L104.49 434.7L104.60 412.7L104.71 383.4L104.83 348.4L104.94 309.3L105.05 268.1L105.16 227.0L105.28 187.9L105.39 152.9L105.50 123.6L105.62 101.6L105.73 87.9L105.84 83.3M107.43 453.0L107.54 448.4L107.65 434.7L107.76 412.7L107.88 383.4L107.99 348.4L108.10 309.3L108.22 268.2L108.33 227.0L108.44 187.9L108.56 152.9L108.67 123.6L108.78 101.6L108.90 87.9L109.01 83.3M110.59 453.0L110.70 448.4L110.82 434.7L110.93 412.7L111.04 383.4L111.16 348.4L111.27 309.3L111.38 268.1L111.50 227.0L111.61 187.9L111.72 152.9L111.83 123.6L111.95 101.6L112.06 87.9L112.17 83.3M113.76 453.0L113.87 448.4L113.98 434.7L114.10 412.7L114.21 383.4L114.32 348.4L114.44 309.3L114.55 268.2L114.66 227.0L114.77 187.9L114.89 152.9L115.00 123.6L115.11 101.6L115.23 87.9L115.34 83.3M116.92 453.0L117.04 448.4L117.15 434.7L117.26 412.7L117.37 383.4L117.49 348.4L117.60 309.3L117.71 268.2L117.83 227.0L117.94 187.9L118.05 152.9L118.17 123.6L118.28 101.6L118.39 87.9L118.50 83.3M120.09 453.0L120.20 448.4L120.31 434.7L120.43 412.7L120.54 383.4L120.65 348.4L120.77 309.3L120.88 268.1L120.99 227.0L121.11 187.9L121.22 152.9L121.33 123.6L121.44 101.6L121.56 87.9L121.67 83.3M123.25 453.0L123.37 448.4L123.48 434.7L123.59 412.7L123.71 383.4L123.82 348.4L123.93 309.3L124.04 268.1L124.16 227.0L124.27 187.9L124.38 152.9L124.50 123.6L124.61 101.6L124.72 87.9L124.84 83.3M126.42 453.0L126.53 448.4L126.64 434.7L126.76 412.7L126.87 383.4L126.98 348.4L127.10 309.3L127.21 268.2L127.32 227.0L127.44 187.9L127.55 152.9L127.66 123.6L127.78 101.6L127.89 87.9L128.00 83.3M129.58 453.0L129.70 448.4L129.81 434.7L129.92 412.7L130.04 383.4L130.15 348.4L130.26 309.3L130.38 268.2L130.49 227.0L130.60 187.9L130.71 152.9L130.83 123.6L130.94 101.6L131.05 87.9L131.17 83.3M132.75 453.0L132.86 448.4L132.98 434.7L133.09 412.7L133.20 383.4L133.32 348.4L133.43 309.3L133.54 268.2L133.65 227.0L133.77 187.9L133.88 152.9L133.99 123.6L134.11 101.6L134.22 87.9L134.33 83.3M135.92 453.0L136.03 448.4L136.14 434.7L136.25 412.7L136.37 383.4L136.48 348.4L136.59 309.3L136.71 268.1L136.82 227.0L136.93 187.9L137.05 152.9L137.16 123.6L137.27 101.6L137.38 87.9L137.50 83.3M139.08 453.0L139.19 448.4L139.31 434.7L139.42 412.7L139.53 383.4L139.65 348.4L139.76 309.3L139.87 268.2L139.99 227.0L140.10 187.9L140.21 152.9L140.32 123.6L140.44 101.6L140.55 87.9L140.66 83.3M142.25 453.0L142.36 448.4L142.47 434.7L142.59 412.7L142.70 383.4L142.81 348.4L142.92 309.3L143.04 268.2L143.15 227.0L143.26 187.9L143.38 152.9L143.49 123.6L143.60 101.6L143.72 87.9L143.83 83.3M145.41 453.0L145.52 448.4L145.64 434.7L145.75 412.7L145.86 383.4L145.98 348.4L146.09 309.3L146.20 268.2L146.32 227.0L146.43 187.9L146.54 152.9L146.66 123.6L146.77 101.6L146.88 87.9L146.99 83.3M148.58 453.0L148.69 448.4L148.80 434.7L148.92 412.7L149.03 383.4L149.14 348.4L149.26 309.3L149.37 268.2L149.48 227.0L149.59 187.9L149.71 152.9L149.82 123.6L149.93 101.6L150.05 87.9L150.16 83.3M151.74 453.0L151.86 448.4L151.97 434.7L152.08 412.7L152.19 383.4L152.31 348.4L152.42 309.3L152.53 268.2L152.65 227.0L152.76 187.9L152.87 152.9L152.99 123.6L153.10 101.6L153.21 87.9L153.33 83.3M154.91 453.0L155.02 448.4L155.13 434.7L155.25 412.7L155.36 383.4L155.47 348.4L155.59 309.3L155.70 268.2L155.81 227.0L155.93 187.9L156.04 152.9L156.15 123.6L156.26 101.6L156.38 87.9L156.49 83.3M158.07 453.0L158.19 448.4L158.30 434.7L158.41 412.7L158.53 383.4L158.64 348.4L158.75 309.3L158.87 268.2L158.98 227.0L159.09 187.9L159.20 152.9L159.32 123.6L159.43 101.6L159.54 87.9L159.66 83.3M161.24 453.0L161.35 448.4L161.47 434.7L161.58 412.7L161.69 383.4L161.80 348.4L161.92 309.3L162.03 268.2L162.14 227.0L162.26 187.9L162.37 152.9L162.48 123.6L162.60 101.6L162.71 87.9L162.82 83.3M164.40 453.0L164.52 448.4L164.63 434.7L164.74 412.7L164.86 383.4L164.97 348.4L165.08 309.3L165.20 268.2L165.31 227.0L165.42 187.9L165.54 152.9L165.65 123.6L165.76 101.6L165.87 87.9L165.99 83.3M167.57 453.0L167.68 448.4L167.80 434.7L167.91 412.7L168.02 383.4L168.14 348.4L168.25 309.3L168.36 268.2L168.47 227.0L168.59 187.9L168.70 152.9L168.81 123.6L168.93 101.6L169.04 87.9L169.15 83.3M170.74 453.0L170.85 448.4L170.96 434.7L171.07 412.7L171.19 383.4L171.30 348.4L171.41 309.3L171.53 268.2L171.64 227.0L171.75 187.9L171.87 152.9L171.98 123.6L172.09 101.6L172.21 87.9L172.32 83.3M173.90 453.0L174.01 448.4L174.13 434.7L174.24 412.7L174.35 383.4L174.47 348.4L174.58 309.3L174.69 268.2L174.81 227.0L174.92 187.9L175.03 152.9L175.14 123.6L175.26 101.6L175.37 87.9L175.48 83.3M177.07 453.0L177.18 448.4L177.29 434.7L177.41 412.7L177.52 383.4L177.63 348.4L177.75 309.3L177.86 268.1L177.97 227.0L178.08 187.9L178.20 152.9L178.31 123.6L178.42 101.6L178.54 87.9L178.65 83.3M180.23 453.0L180.35 448.4L180.46 434.7L180.57 412.7L180.68 383.4L180.80 348.4L180.91 309.3L181.02 268.2L181.14 227.0L181.25 187.9L181.36 152.9L181.48 123.6L181.59 101.6L181.70 87.9L181.81 83.3M183.40 453.0L183.51 448.4L183.62 434.7L183.74 412.7L183.85 383.4L183.96 348.4L184.08 309.3L184.19 268.2L184.30 227.0L184.42 187.9L184.53 152.9L184.64 123.6L184.75 101.6L184.87 87.9L184.98 83.3M186.56 453.0L186.68 448.4L186.79 434.7L186.90 412.7L187.02 383.4L187.13 348.4L187.24 309.3L187.35 268.2L187.47 227.0L187.58 187.9L187.69 152.9L187.81 123.6L187.92 101.6L188.03 87.9L188.15 83.3M189.73 453.0L189.84 448.4L189.95 434.7L190.07 412.7L190.18 383.4L190.29 348.4L190.41 309.3L190.52 268.2L190.63 227.0L190.75 187.9L190.86 152.9L190.97 123.6L191.09 101.6L191.20 87.9L191.31 83.3M192.89 453.0L193.01 448.4L193.12 434.7L193.23 412.7L193.35 383.4L193.46 348.4L193.57 309.3L193.69 268.2L193.80 227.0L193.91 187.9L194.02 152.9L194.14 123.6L194.25 101.6L194.36 87.9L194.48 83.3M196.06 453.0L196.17 448.4L196.29 434.7L196.40 412.7L196.51 383.4L196.63 348.4L196.74 309.3L196.85 268.2L196.96 227.0L197.08 187.9L197.19 152.9L197.30 123.6L197.42 101.6L197.53 87.9L197.64 83.3M199.23 453.0L199.34 448.4L199.45 434.7L199.56 412.7L199.68 383.4L199.79 348.4L199.90 309.3L200.02 268.2L200.13 227.0L200.24 187.9L200.36 152.9L200.47 123.6L200.58 101.6L200.69 87.9L200.81 83.3M202.39 453.0L202.50 448.4L202.62 434.7L202.73 412.7L202.84 383.4L202.96 348.4L203.07 309.3L203.18 268.2L203.30 227.0L203.41 187.9L203.52 152.9L203.63 123.6L203.75 101.6L203.86 87.9L203.97 83.3M205.56 453.0L205.67 448.4L205.78 434.7L205.90 412.7L206.01 383.4L206.12 348.4L206.23 309.3L206.35 268.2L206.46 227.0L206.57 187.9L206.69 152.9L206.80 123.6L206.91 101.6L207.03 87.9L207.14 83.3M208.72 453.0L208.83 448.4L208.95 434.7L209.06 412.7L209.17 383.4L209.29 348.4L209.40 309.3L209.51 268.2L209.63 227.0L209.74 187.9L209.85 152.9L209.97 123.6L210.08 101.6L210.19 87.9L210.30 83.3M211.89 453.0L212.00 448.4L212.11 434.7L212.23 412.7L212.34 383.4L212.45 348.4L212.57 309.3L212.68 268.2L212.79 227.0L212.90 187.9L213.02 152.9L213.13 123.6L213.24 101.6L213.36 87.9L213.47 83.3M215.05 453.0L215.17 448.4L215.28 434.7L215.39 412.7L215.50 383.4L215.62 348.4L215.73 309.3L215.84 268.2L215.96 227.0L216.07 187.9L216.18 152.9L216.30 123.6L216.41 101.6L216.52 87.9L216.64 83.3M218.22 453.0L218.33 448.4L218.44 434.7L218.56 412.7L218.67 383.4L218.78 348.4L218.90 309.3L219.01 268.2L219.12 227.0L219.24 187.9L219.35 152.9L219.46 123.6L219.57 101.6L219.69 87.9L219.80 83.3M221.38 453.0L221.50 448.4L221.61 434.7L221.72 412.7L221.84 383.4L221.95 348.4L222.06 309.3L222.18 268.2L222.29 227.0L222.40 187.9L222.51 152.9L222.63 123.6L222.74 101.6L222.85 87.9L222.97 83.3M224.55 453.0L224.66 448.4L224.78 434.7L224.89 412.7L225.00 383.4L225.11 348.4L225.23 309.3L225.34 268.2L225.45 227.0L225.57 187.9L225.68 152.9L225.79 123.6L225.91 101.6L226.02 87.9L226.13 83.3M227.71 453.0L227.83 448.4L227.94 434.7L228.05 412.7L228.17 383.4L228.28 348.4L228.39 309.3L228.51 268.1L228.62 227.0L228.73 187.9L228.85 152.9L228.96 123.6L229.07 101.6L229.18 87.9L229.30 83.3M230.88 453.0L230.99 448.4L231.11 434.7L231.22 412.7L231.33 383.4L231.45 348.4L231.56 309.3L231.67 268.2L231.78 227.0L231.90 187.9L232.01 152.9L232.12 123.6L232.24 101.6L232.35 87.9L232.46 83.3M234.05 453.0L234.16 448.4L234.27 434.7L234.38 412.7L234.50 383.4L234.61 348.4L234.72 309.3L234.84 268.2L234.95 227.0L235.06 187.9L235.18 152.9L235.29 123.6L235.40 101.6L235.52 87.9L235.63 83.3M237.21 453.0L237.32 448.4L237.44 434.7L237.55 412.7L237.66 383.4L237.78 348.4L237.89 309.3L238.00 268.2L238.12 227.0L238.23 187.9L238.34 152.9L238.45 123.6L238.57 101.6L238.68 87.9L238.79 83.3M240.38 453.0L240.49 448.4L240.60 434.7L240.72 412.7L240.83 383.4L240.94 348.4L241.06 309.3L241.17 268.2L241.28 227.0L241.39 187.9L241.51 152.9L241.62 123.6L241.73 101.6L241.85 87.9L241.96 83.3M243.54 453.0L243.66 448.4L243.77 434.7L243.88 412.7L243.99 383.4L244.11 348.4L244.22 309.3L244.33 268.2L244.45 227.0L244.56 187.9L244.67 152.9L244.79 123.6L244.90 101.6L245.01 87.9L245.12 83.3M246.71 453.0L246.82 448.4L246.93 434.7L247.05 412.7L247.16 383.4L247.27 348.4L247.39 309.3L247.50 268.2L247.61 227.0L247.73 187.9L247.84 152.9L247.95 123.6L248.06 101.6L248.18 87.9L248.29 83.3M249.87 453.0L249.99 448.4L250.10 434.7L250.21 412.7L250.33 383.4L250.44 348.4L250.55 309.3L250.66 268.2L250.78 227.0L250.89 187.9L251.00 152.9L251.12 123.6L251.23 101.6L251.34 87.9L251.46 83.3M253.04 453.0L253.15 448.4L253.26 434.7L253.38 412.7L253.49 383.4L253.60 348.4L253.72 309.3L253.83 268.2L253.94 227.0L254.06 187.9L254.17 152.9L254.28 123.6L254.40 101.6L254.51 87.9L254.62 83.3M256.20 453.0L256.32 448.4L256.43 434.7L256.54 412.7L256.66 383.4L256.77 348.4L256.88 309.3L257.00 268.2L257.11 227.0L257.22 187.9L257.33 152.9L257.45 123.6L257.56 101.6L257.67 87.9L257.79 83.3M259.37 453.0L259.48 448.4L259.60 434.7L259.71 412.7L259.82 383.4L259.94 348.4L260.05 309.3L260.16 268.1L260.27 227.0L260.39 187.9L260.50 152.9L260.61 123.6L260.73 101.6L260.84 87.9L260.95 83.3M262.54 453.0L262.65 448.4L262.76 434.7L262.87 412.7L262.99 383.4L263.10 348.4L263.21 309.3L263.33 268.1L263.44 227.0L263.55 187.9L263.67 152.9L263.78 123.6L263.89 101.6L264.00 87.9L264.12 83.3M265.70 453.0L265.81 448.4L265.93 434.7L266.04 412.7L266.15 383.4L266.27 348.4L266.38 309.3L266.49 268.2L266.61 227.0L266.72 187.9L266.83 152.9L266.94 123.6L267.06 101.6L267.17 87.9L267.28 83.3M268.87 453.0L268.98 448.4L269.09 434.7L269.21 412.7L269.32 383.4L269.43 348.4L269.54 309.3L269.66 268.1L269.77 227.0L269.88 187.9L270.00 152.9L270.11 123.6L270.22 101.6L270.34 87.9L270.45 83.3M272.03 453.0L272.14 448.4L272.26 434.7L272.37 412.7L272.48 383.4L272.60 348.4L272.71 309.3L272.82 268.2L272.94 227.0L273.05 187.9L273.16 152.9L273.28 123.6L273.39 101.6L273.50 87.9L273.61 83.3M275.20 453.0L275.31 448.4L275.42 434.7L275.54 412.7L275.65 383.4L275.76 348.4L275.88 309.3L275.99 268.1L276.10 227.0L276.21 187.9L276.33 152.9L276.44 123.6L276.55 101.6L276.67 87.9L276.78 83.3M278.36 453.0L278.48 448.4L278.59 434.7L278.70 412.7L278.81 383.4L278.93 348.4L279.04 309.3L279.15 268.2L279.27 227.0L279.38 187.9L279.49 152.9L279.61 123.6L279.72 101.6L279.83 87.9L279.95 83.3M281.53 453.0L281.64 448.4L281.75 434.7L281.87 412.7L281.98 383.4L282.09 348.4L282.21 309.3L282.32 268.1L282.43 227.0L282.55 187.9L282.66 152.9L282.77 123.6L282.88 101.6L283.00 87.9L283.11 83.3M284.69 453.0L284.81 448.4L284.92 434.7L285.03 412.7L285.15 383.4L285.26 348.4L285.37 309.3L285.49 268.1L285.60 227.0L285.71 187.9L285.82 152.9L285.94 123.6L286.05 101.6L286.16 87.9L286.28 83.3M287.86 453.0L287.97 448.4L288.09 434.7L288.20 412.7L288.31 383.4L288.42 348.4L288.54 309.3L288.65 268.2L288.76 227.0L288.88 187.9L288.99 152.9L289.10 123.6L289.22 101.6L289.33 87.9L289.44 83.3M291.02 453.0L291.14 448.4L291.25 434.7L291.36 412.7L291.48 383.4L291.59 348.4L291.70 309.3L291.82 268.1L291.93 227.0L292.04 187.9L292.16 152.9L292.27 123.6L292.38 101.6L292.49 87.9L292.61 83.3M294.19 453.0L294.30 448.4L294.42 434.7L294.53 412.7L294.64 383.4L294.76 348.4L294.87 309.3L294.98 268.2L295.09 227.0L295.21 187.9L295.32 152.9L295.43 123.6L295.55 101.6L295.66 87.9L295.77 83.3M297.36 453.0L297.47 448.4L297.58 434.7L297.69 412.7L297.81 383.4L297.92 348.4L298.03 309.3L298.15 268.1L298.26 227.0L298.37 187.9L298.49 152.9L298.60 123.6L298.71 101.6L298.83 87.9L298.94 83.3M300.52 453.0L300.63 448.4L300.75 434.7L300.86 412.7L300.97 383.4L301.09 348.4L301.20 309.3L301.31 268.1L301.43 227.0L301.54 187.9L301.65 152.9L301.76 123.6L301.88 101.6L301.99 87.9L302.10 83.3M303.69 453.0L303.80 448.4L303.91 434.7L304.03 412.7L304.14 383.4L304.25 348.4L304.37 309.3L304.48 268.1L304.59 227.0L304.70 187.9L304.82 152.9L304.93 123.6L305.04 101.6L305.16 87.9L305.27 83.3M306.85 453.0L306.97 448.4L307.08 434.7L307.19 412.7L307.30 383.4L307.42 348.4L307.53 309.3L307.64 268.1L307.76 227.0L307.87 187.9L307.98 152.9L308.10 123.6L308.21 101.6L308.32 87.9L308.44 83.3M310.02 453.0L310.13 448.4L310.24 434.7L310.36 412.7L310.47 383.4L310.58 348.4L310.70 309.3L310.81 268.2L310.92 227.0L311.04 187.9L311.15 152.9L311.26 123.6L311.37 101.6L311.49 87.9L311.60 83.3M313.18 453.0L313.30 448.4L313.41 434.7L313.52 412.7L313.64 383.4L313.75 348.4L313.86 309.3L313.97 268.1L314.09 227.0L314.20 187.9L314.31 152.9L314.43 123.6L314.54 101.6L314.65 87.9L314.77 83.3M316.35 453.0L316.46 448.4L316.57 434.7L316.69 412.7L316.80 383.4L316.91 348.4L317.03 309.3L317.14 268.2L317.25 227.0L317.37 187.9L317.48 152.9L317.59 123.6L317.71 101.6L317.82 87.9L317.93 83.3M319.51 453.0L319.63 448.4L319.74 434.7L319.85 412.7L319.97 383.4L320.08 348.4L320.19 309.3L320.31 268.1L320.42 227.0L320.53 187.9L320.64 152.9L320.76 123.6L320.87 101.6L320.98 87.9L321.10 83.3M322.68 453.0L322.79 448.4L322.91 434.7L323.02 412.7L323.13 383.4L323.25 348.4L323.36 309.3L323.47 268.2L323.58 227.0L323.70 187.9L323.81 152.9L323.92 123.6L324.04 101.6L324.15 87.9L324.26 83.3M325.85 453.0L325.96 448.4L326.07 434.7L326.18 412.7L326.30 383.4L326.41 348.4L326.52 309.3L326.64 268.1L326.75 227.0L326.86 187.9L326.98 152.9L327.09 123.6L327.20 101.6L327.31 87.9L327.43 83.3M329.01 453.0L329.12 448.4L329.24 434.7L329.35 412.7L329.46 383.4L329.58 348.4L329.69 309.3L329.80 268.1L329.92 227.0L330.03 187.9L330.14 152.9L330.25 123.6L330.37 101.6L330.48 87.9L330.59 83.3M332.18 453.0L332.29 448.4L332.40 434.7L332.52 412.7L332.63 383.4L332.74 348.4L332.85 309.3L332.97 268.2L333.08 227.0L333.19 187.9L333.31 152.9L333.42 123.6L333.53 101.6L333.65 87.9L333.76 83.3M335.34 453.0L335.45 448.4L335.57 434.7L335.68 412.7L335.79 383.4L335.91 348.4L336.02 309.3L336.13 268.1L336.25 227.0L336.36 187.9L336.47 152.9L336.59 123.6L336.70 101.6L336.81 87.9L336.92 83.3M338.51 453.0L338.62 448.4L338.73 434.7L338.85 412.7L338.96 383.4L339.07 348.4L339.19 309.3L339.30 268.2L339.41 227.0L339.52 187.9L339.64 152.9L339.75 123.6L339.86 101.6L339.98 87.9L340.09 83.3M341.67 453.0L341.79 448.4L341.90 434.7L342.01 412.7L342.12 383.4L342.24 348.4L342.35 309.3L342.46 268.1L342.58 227.0L342.69 187.9L342.80 152.9L342.92 123.6L343.03 101.6L343.14 87.9L343.26 83.3M344.84 453.0L344.95 448.4L345.06 434.7L345.18 412.7L345.29 383.4L345.40 348.4L345.52 309.3L345.63 268.2L345.74 227.0L345.86 187.9L345.97 152.9L346.08 123.6L346.19 101.6L346.31 87.9L346.42 83.3M348.00 453.0L348.12 448.4L348.23 434.7L348.34 412.7L348.46 383.4L348.57 348.4L348.68 309.3L348.80 268.2L348.91 227.0L349.02 187.9L349.13 152.9L349.25 123.6L349.36 101.6L349.47 87.9L349.59 83.3M351.17 453.0L351.28 448.4L351.40 434.7L351.51 412.7L351.62 383.4L351.73 348.4L351.85 309.3L351.96 268.2L352.07 227.0L352.19 187.9L352.30 152.9L352.41 123.6L352.53 101.6L352.64 87.9L352.75 83.3M354.33 453.0L354.45 448.4L354.56 434.7L354.67 412.7L354.79 383.4L354.90 348.4L355.01 309.3L355.13 268.2L355.24 227.0L355.35 187.9L355.47 152.9L355.58 123.6L355.69 101.6L355.80 87.9L355.92 83.3M357.50 453.0L357.61 448.4L357.73 434.7L357.84 412.7L357.95 383.4L358.07 348.4L358.18 309.3L358.29 268.1L358.40 227.0L358.52 187.9L358.63 152.9L358.74 123.6L358.86 101.6L358.97 87.9L359.08 83.3M360.67 453.0L360.78 448.4L360.89 434.7L361.00 412.7L361.12 383.4L361.23 348.4L361.34 309.3L361.46 268.1L361.57 227.0L361.68 187.9L361.80 152.9L361.91 123.6L362.02 101.6L362.14 87.9L362.25 83.3M363.83 453.0L363.94 448.4L364.06 434.7L364.17 412.7L364.28 383.4L364.40 348.4L364.51 309.3L364.62 268.1L364.74 227.0L364.85 187.9L364.96 152.9L365.07 123.6L365.19 101.6L365.30 87.9L365.41 83.3M367.00 453.0L367.11 448.4L367.22 434.7L367.34 412.7L367.45 383.4L367.56 348.4L367.68 309.3L367.79 268.2L367.90 227.0L368.01 187.9L368.13 152.9L368.24 123.6L368.35 101.6L368.47 87.9L368.58 83.3M370.16 453.0L370.28 448.4L370.39 434.7L370.50 412.7L370.61 383.4L370.73 348.4L370.84 309.3L370.95 268.2L371.07 227.0L371.18 187.9L371.29 152.9L371.41 123.6L371.52 101.6L371.63 87.9L371.74 83.3M373.33 453.0L373.44 448.4L373.55 434.7L373.67 412.7L373.78 383.4L373.89 348.4L374.01 309.3L374.12 268.1L374.23 227.0L374.35 187.9L374.46 152.9L374.57 123.6L374.68 101.6L374.80 87.9L374.91 83.3M376.49 453.0L376.61 448.4L376.72 434.7L376.83 412.7L376.95 383.4L377.06 348.4L377.17 309.3L377.28 268.2L377.40 227.0L377.51 187.9L377.62 152.9L377.74 123.6L377.85 101.6L377.96 87.9L378.08 83.3M379.66 453.0L379.77 448.4L379.88 434.7L380.00 412.7L380.11 383.4L380.22 348.4L380.34 309.3L380.45 268.1L380.56 227.0L380.68 187.9L380.79 152.9L380.90 123.6L381.02 101.6L381.13 87.9L381.24 83.3M382.82 453.0L382.94 448.4L383.05 434.7L383.16 412.7L383.28 383.4L383.39 348.4L383.50 309.3L383.62 268.2L383.73 227.0L383.84 187.9L383.95 152.9L384.07 123.6L384.18 101.6L384.29 87.9L384.41 83.3M385.99 453.0L386.10 448.4L386.22 434.7L386.33 412.7L386.44 383.4L386.56 348.4L386.67 309.3L386.78 268.2L386.89 227.0L387.01 187.9L387.12 152.9L387.23 123.6L387.35 101.6L387.46 87.9L387.57 83.3M389.16 453.0L389.27 448.4L389.38 434.7L389.49 412.7L389.61 383.4L389.72 348.4L389.83 309.3L389.95 268.2L390.06 227.0L390.17 187.9L390.29 152.9L390.40 123.6L390.51 101.6L390.62 87.9L390.74 83.3M392.32 453.0L392.43 448.4L392.55 434.7L392.66 412.7L392.77 383.4L392.89 348.4L393.00 309.3L393.11 268.2L393.23 227.0L393.34 187.9L393.45 152.9L393.56 123.6L393.68 101.6L393.79 87.9L393.90 83.3M395.49 453.0L395.60 448.4L395.71 434.7L395.83 412.7L395.94 383.4L396.05 348.4L396.16 309.3L396.28 268.2L396.39 227.0L396.50 187.9L396.62 152.9L396.73 123.6L396.84 101.6L396.96 87.9L397.07 83.3M398.65 453.0L398.76 448.4L398.88 434.7L398.99 412.7L399.10 383.4L399.22 348.4L399.33 309.3L399.44 268.2L399.56 227.0L399.67 187.9L399.78 152.9L399.90 123.6L400.01 101.6L400.12 87.9L400.23 83.3M401.82 453.0L401.93 448.4L402.04 434.7L402.16 412.7L402.27 383.4L402.38 348.4L402.50 309.3L402.61 268.2L402.72 227.0L402.83 187.9L402.95 152.9L403.06 123.6L403.17 101.6L403.29 87.9L403.40 83.3M404.98 453.0L405.10 448.4L405.21 434.7L405.32 412.7L405.43 383.4L405.55 348.4L405.66 309.3L405.77 268.2L405.89 227.0L406.00 187.9L406.11 152.9L406.23 123.6L406.34 101.6L406.45 87.9L406.57 83.3M408.15 453.0L408.26 448.4L408.37 434.7L408.49 412.7L408.60 383.4L408.71 348.4L408.83 309.3L408.94 268.2L409.05 227.0L409.17 187.9L409.28 152.9L409.39 123.6L409.50 101.6L409.62 87.9L409.73 83.3M411.31 453.0L411.43 448.4L411.54 434.7L411.65 412.7L411.77 383.4L411.88 348.4L411.99 309.3L412.11 268.1L412.22 227.0L412.33 187.9L412.44 152.9L412.56 123.6L412.67 101.6L412.78 87.9L412.90 83.3M414.48 453.0L414.59 448.4L414.71 434.7L414.82 412.7L414.93 383.4L415.04 348.4L415.16 309.3L415.27 268.2L415.38 227.0L415.50 187.9L415.61 152.9L415.72 123.6L415.84 101.6L415.95 87.9L416.06 83.3M417.64 453.0L417.76 448.4L417.87 434.7L417.98 412.7L418.10 383.4L418.21 348.4L418.32 309.3L418.44 268.2L418.55 227.0L418.66 187.9L418.78 152.9L418.89 123.6L419.00 101.6L419.11 87.9L419.23 83.3M420.81 453.0L420.92 448.4L421.04 434.7L421.15 412.7L421.26 383.4L421.38 348.4L421.49 309.3L421.60 268.2L421.71 227.0L421.83 187.9L421.94 152.9L422.05 123.6L422.17 101.6L422.28 87.9L422.39 83.3M423.98 453.0L424.09 448.4L424.20 434.7L424.31 412.7L424.43 383.4L424.54 348.4L424.65 309.3L424.77 268.1L424.88 227.0L424.99 187.9L425.11 152.9L425.22 123.6L425.33 101.6L425.45 87.9L425.56 83.3M427.14 453.0L427.25 448.4L427.37 434.7L427.48 412.7L427.59 383.4L427.71 348.4L427.82 309.3L427.93 268.1L428.05 227.0L428.16 187.9L428.27 152.9L428.38 123.6L428.50 101.6L428.61 87.9L428.72 83.3M430.31 453.0L430.42 448.4L430.53 434.7L430.65 412.7L430.76 383.4L430.87 348.4L430.99 309.3L431.10 268.2L431.21 227.0L431.32 187.9L431.44 152.9L431.55 123.6L431.66 101.6L431.78 87.9L431.89 83.3M433.47 453.0L433.59 448.4L433.70 434.7L433.81 412.7L433.92 383.4L434.04 348.4L434.15 309.3L434.26 268.2L434.38 227.0L434.49 187.9L434.60 152.9L434.72 123.6L434.83 101.6L434.94 87.9L435.06 83.3M436.64 453.0L436.75 448.4L436.86 434.7L436.98 412.7L437.09 383.4L437.20 348.4L437.32 309.3L437.43 268.2L437.54 227.0L437.66 187.9L437.77 152.9L437.88 123.6L437.99 101.6L438.11 87.9L438.22 83.3M439.80 453.0L439.92 448.4L440.03 434.7L440.14 412.7L440.26 383.4L440.37 348.4L440.48 309.3L440.59 268.1L440.71 227.0L440.82 187.9L440.93 152.9L441.05 123.6L441.16 101.6L441.27 87.9L441.39 83.3M442.97 453.0L443.08 448.4L443.19 434.7L443.31 412.7L443.42 383.4L443.53 348.4L443.65 309.3L443.76 268.1L443.87 227.0L443.99 187.9L444.10 152.9L444.21 123.6L444.33 101.6L444.44 87.9L444.55 83.3M446.13 453.0L446.25 448.4L446.36 434.7L446.47 412.7L446.59 383.4L446.70 348.4L446.81 309.3L446.93 268.1L447.04 227.0L447.15 187.9L447.26 152.9L447.38 123.6L447.49 101.6L447.60 87.9L447.72 83.3M449.30 453.0L449.41 448.4L449.53 434.7L449.64 412.7L449.75 383.4L449.87 348.4L449.98 309.3L450.09 268.2L450.20 227.0L450.32 187.9L450.43 152.9L450.54 123.6L450.66 101.6L450.77 87.9L450.88 83.3M452.47 453.0L452.58 448.4L452.69 434.7L452.80 412.7L452.92 383.4L453.03 348.4L453.14 309.3L453.26 268.2L453.37 227.0L453.48 187.9L453.60 152.9L453.71 123.6L453.82 101.6L453.93 87.9L454.05 83.3M455.63 453.0L455.74 448.4L455.86 434.7L455.97 412.7L456.08 383.4L456.20 348.4L456.31 309.3L456.42 268.1L456.54 227.0L456.65 187.9L456.76 152.9L456.87 123.6L456.99 101.6L457.10 87.9L457.21 83.3M458.80 453.0L458.91 448.4L459.02 434.7L459.14 412.7L459.25 383.4L459.36 348.4L459.47 309.3L459.59 268.2L459.70 227.0L459.81 187.9L459.93 152.9L460.04 123.6L460.15 101.6L460.27 87.9L460.38 83.3M461.96 453.0L462.07 448.4L462.19 434.7L462.30 412.7L462.41 383.4L462.53 348.4L462.64 309.3L462.75 268.1L462.87 227.0L462.98 187.9L463.09 152.9L463.21 123.6L463.32 101.6L463.43 87.9L463.54 83.3M465.13 453.0L465.24 448.4L465.35 434.7L465.47 412.7L465.58 383.4L465.69 348.4L465.81 309.3L465.92 268.2L466.03 227.0L466.14 187.9L466.26 152.9L466.37 123.6L466.48 101.6L466.60 87.9L466.71 83.3M468.29 453.0L468.41 448.4L468.52 434.7L468.63 412.7L468.74 383.4L468.86 348.4L468.97 309.3L469.08 268.1L469.20 227.0L469.31 187.9L469.42 152.9L469.54 123.6L469.65 101.6L469.76 87.9L469.88 83.3M471.46 453.0L471.57 448.4L471.68 434.7L471.80 412.7L471.91 383.4L472.02 348.4L472.14 309.3L472.25 268.2L472.36 227.0L472.48 187.9L472.59 152.9L472.70 123.6L472.81 101.6L472.93 87.9L473.04 83.3M474.62 453.0L474.74 448.4L474.85 434.7L474.96 412.7L475.08 383.4L475.19 348.4L475.30 309.3L475.42 268.2L475.53 227.0L475.64 187.9L475.75 152.9L475.87 123.6L475.98 101.6L476.09 87.9L476.21 83.3M477.79 453.0L477.90 448.4L478.02 434.7L478.13 412.7L478.24 383.4L478.35 348.4L478.47 309.3L478.58 268.2L478.69 227.0L478.81 187.9L478.92 152.9L479.03 123.6L479.15 101.6L479.26 87.9L479.37 83.3M480.95 453.0L481.07 448.4L481.18 434.7L481.29 412.7L481.41 383.4L481.52 348.4L481.63 309.3L481.75 268.2L481.86 227.0L481.97 187.9L482.09 152.9L482.20 123.6L482.31 101.6L482.42 87.9L482.54 83.3M484.12 453.0L484.23 448.4L484.35 434.7L484.46 412.7L484.57 383.4L484.69 348.4L484.80 309.3L484.91 268.2L485.02 227.0L485.14 187.9L485.25 152.9L485.36 123.6L485.48 101.6L485.59 87.9L485.70 83.3M487.29 453.0L487.40 448.4L487.51 434.7L487.62 412.7L487.74 383.4L487.85 348.4L487.96 309.3L488.08 268.2L488.19 227.0L488.30 187.9L488.42 152.9L488.53 123.6L488.64 101.6L488.76 87.9L488.87 83.3M490.45 453.0L490.56 448.4L490.68 434.7L490.79 412.7L490.90 383.4L491.02 348.4L491.13 309.3L491.24 268.1L491.36 227.0L491.47 187.9L491.58 152.9L491.69 123.6L491.81 101.6L491.92 87.9L492.03 83.3M493.62 453.0L493.73 448.4L493.84 434.7L493.96 412.7L494.07 383.4L494.18 348.4L494.30 309.3L494.41 268.2L494.52 227.0L494.63 187.9L494.75 152.9L494.86 123.6L494.97 101.6L495.09 87.9L495.20 83.3M496.78 453.0L496.90 448.4L497.01 434.7L497.12 412.7L497.23 383.4L497.35 348.4L497.46 309.3L497.57 268.2L497.69 227.0L497.80 187.9L497.91 152.9L498.03 123.6L498.14 101.6L498.25 87.9L498.36 83.3M499.95 453.0L500.06 448.4L500.17 434.7L500.29 412.7L500.40 383.4L500.51 348.4L500.63 309.3L500.74 268.2L500.85 227.0L500.97 187.9L501.08 152.9L501.19 123.6L501.30 101.6L501.42 87.9L501.53 83.3M503.11 453.0L503.23 448.4L503.34 434.7L503.45 412.7L503.57 383.4L503.68 348.4L503.79 309.3L503.90 268.2L504.02 227.0L504.13 187.9L504.24 152.9L504.36 123.6L504.47 101.6L504.58 87.9L504.70 83.3M506.28 453.0L506.39 448.4L506.50 434.7L506.62 412.7L506.73 383.4L506.84 348.4L506.96 309.3L507.07 268.2L507.18 227.0L507.30 187.9L507.41 152.9L507.52 123.6L507.64 101.6L507.75 87.9L507.86 83.3M509.44 453.0L509.56 448.4L509.67 434.7L509.78 412.7L509.90 383.4L510.01 348.4L510.12 309.3L510.24 268.2L510.35 227.0L510.46 187.9L510.57 152.9L510.69 123.6L510.80 101.6L510.91 87.9L511.03 83.3M512.61 453.0L512.72 448.4L512.84 434.7L512.95 412.7L513.06 383.4L513.18 348.4L513.29 309.3L513.40 268.2L513.51 227.0L513.63 187.9L513.74 152.9L513.85 123.6L513.97 101.6L514.08 87.9L514.19 83.3M515.78 453.0L515.89 448.4L516.00 434.7L516.11 412.7L516.23 383.4L516.34 348.4L516.45 309.3L516.57 268.2L516.68 227.0L516.79 187.9L516.91 152.9L517.02 123.6L517.13 101.6L517.24 87.9L517.36 83.3M518.94 453.0L519.05 448.4L519.17 434.7L519.28 412.7L519.39 383.4L519.51 348.4L519.62 309.3L519.73 268.2L519.85 227.0L519.96 187.9L520.07 152.9L520.18 123.6L520.30 101.6L520.41 87.9L520.52 83.3M522.11 453.0L522.22 448.4L522.33 434.7L522.45 412.7L522.56 383.4L522.67 348.4L522.78 309.3L522.90 268.2L523.01 227.0L523.12 187.9L523.24 152.9L523.35 123.6L523.46 101.6L523.58 87.9L523.69 83.3M525.27 453.0L525.38 448.4L525.50 434.7L525.61 412.7L525.72 383.4L525.84 348.4L525.95 309.3L526.06 268.2L526.18 227.0L526.29 187.9L526.40 152.9L526.52 123.6L526.63 101.6L526.74 87.9L526.85 83.3M528.44 453.0L528.55 448.4L528.66 434.7L528.78 412.7L528.89 383.4L529.00 348.4L529.12 309.3L529.23 268.2L529.34 227.0L529.45 187.9L529.57 152.9L529.68 123.6L529.79 101.6L529.91 87.9L530.02 83.3M531.60 453.0L531.72 448.4L531.83 434.7L531.94 412.7L532.05 383.4L532.17 348.4L532.28 309.3L532.39 268.2L532.51 227.0L532.62 187.9L532.73 152.9L532.85 123.6L532.96 101.6L533.07 87.9L533.19 83.3M534.77 453.0L534.88 448.4L534.99 434.7L535.11 412.7L535.22 383.4L535.33 348.4L535.45 309.3L535.56 268.2L535.67 227.0L535.79 187.9L535.90 152.9L536.01 123.6L536.12 101.6L536.24 87.9L536.35 83.3M537.93 453.0L538.05 448.4L538.16 434.7L538.27 412.7L538.39 383.4L538.50 348.4L538.61 309.3L538.73 268.2L538.84 227.0L538.95 187.9L539.06 152.9L539.18 123.6L539.29 101.6L539.40 87.9L539.52 83.3M541.10 453.0L541.21 448.4L541.33 434.7L541.44 412.7L541.55 383.4L541.66 348.4L541.78 309.3L541.89 268.2L542.00 227.0L542.12 187.9L542.23 152.9L542.34 123.6L542.46 101.6L542.57 87.9L542.68 83.3M544.26 453.0L544.38 448.4L544.49 434.7L544.60 412.7L544.72 383.4L544.83 348.4L544.94 309.3L545.06 268.1L545.17 227.0L545.28 187.9L545.40 152.9L545.51 123.6L545.62 101.6L545.73 87.9L545.85 83.3M547.43 453.0L547.54 448.4L547.66 434.7L547.77 412.7L547.88 383.4L548.00 348.4L548.11 309.3L548.22 268.2L548.33 227.0L548.45 187.9L548.56 152.9L548.67 123.6L548.79 101.6L548.90 87.9L549.01 83.3M550.60 453.0L550.71 448.4L550.82 434.7L550.93 412.7L551.05 383.4L551.16 348.4L551.27 309.3L551.39 268.1L551.50 227.0L551.61 187.9L551.73 152.9L551.84 123.6L551.95 101.6L552.07 87.9L552.18 83.3M553.76 453.0L553.87 448.4L553.99 434.7L554.10 412.7L554.21 383.4L554.33 348.4L554.44 309.3L554.55 268.2L554.67 227.0L554.78 187.9L554.89 152.9L555.00 123.6L555.12 101.6L555.23 87.9L555.34 83.3M556.93 453.0L557.04 448.4L557.15 434.7L557.27 412.7L557.38 383.4L557.49 348.4L557.61 309.3L557.72 268.2L557.83 227.0L557.94 187.9L558.06 152.9L558.17 123.6L558.28 101.6L558.40 87.9L558.51 83.3M560.09 453.0L560.21 448.4L560.32 434.7L560.43 412.7L560.54 383.4L560.66 348.4L560.77 309.3L560.88 268.1L561.00 227.0L561.11 187.9L561.22 152.9L561.34 123.6L561.45 101.6L561.56 87.9L561.68 83.3M563.26 453.0L563.37 448.4L563.48 434.7L563.60 412.7L563.71 383.4L563.82 348.4L563.94 309.3L564.05 268.2L564.16 227.0L564.28 187.9L564.39 152.9L564.50 123.6L564.61 101.6L564.73 87.9L564.84 83.3M566.42 453.0L566.54 448.4L566.65 434.7L566.76 412.7L566.88 383.4L566.99 348.4L567.10 309.3L567.21 268.1L567.33 227.0L567.44 187.9L567.55 152.9L567.67 123.6L567.78 101.6L567.89 87.9L568.01 83.3M569.59 453.0L569.70 448.4L569.81 434.7L569.93 412.7L570.04 383.4L570.15 348.4L570.27 309.3L570.38 268.2L570.49 227.0L570.61 187.9L570.72 152.9L570.83 123.6L570.95 101.6L571.06 87.9L571.17 83.3M572.75 453.0L572.87 448.4L572.98 434.7L573.09 412.7L573.21 383.4L573.32 348.4L573.43 309.3L573.55 268.1L573.66 227.0L573.77 187.9L573.88 152.9L574.00 123.6L574.11 101.6L574.22 87.9L574.34 83.3M575.92 453.0L576.03 448.4L576.15 434.7L576.26 412.7L576.37 383.4L576.49 348.4L576.60 309.3L576.71 268.1L576.82 227.0L576.94 187.9L577.05 152.9L577.16 123.6L577.28 101.6L577.39 87.9L577.50 83.3M579.09 453.0L579.20 448.4L579.31 434.7L579.42 412.7L579.54 383.4L579.65 348.4L579.76 309.3L579.88 268.2L579.99 227.0L580.10 187.9L580.22 152.9L580.33 123.6L580.44 101.6L580.55 87.9L580.67 83.3M582.25 453.0L582.36 448.4L582.48 434.7L582.59 412.7L582.70 383.4L582.82 348.4L582.93 309.3L583.04 268.2L583.16 227.0L583.27 187.9L583.38 152.9L583.49 123.6L583.61 101.6L583.72 87.9L583.83 83.3M585.42 453.0L585.53 448.4L585.64 434.7L585.76 412.7L585.87 383.4L585.98 348.4L586.09 309.3L586.21 268.2L586.32 227.0L586.43 187.9L586.55 152.9L586.66 123.6L586.77 101.6L586.89 87.9L587.00 83.3"/></g>
<g stroke="#000" stroke-width="1" stroke-opacity="0.6" fill="none"><path d="M83.5 464v-4M83.5 73v4"/><path d="M184.5 464v-4M184.5 73v4"/><path d="M285.5 464v-4M285.5 73v4"/><path d="M385.5 464v-4M385.5 73v4"/><path d="M486.5 464v-4M486.5 73v4"/><path d="M587.5 464v-4M587.5 73v4"/><path d="M84 72.5h4M587 72.5h-4"/><path d="M84 137.5h4M587 137.5h-4"/><path d="M84 203.5h4M587 203.5h-4"/><path d="M84 268.5h4M587 268.5h-4"/><path d="M84 333.5h4M587 333.5h-4"/><path d="M84 399.5h4M587 399.5h-4"/><path d="M84 464.5h4M587 464.5h-4"/></g>
<rect x="83.5" y="72.5" width="504" height="392" fill="none" stroke="#000" stroke-width="1"/>
<g><text x="58.8 66.8 70.8" y="0" transform="translate(0,75.0) scale(1,0.94)">1.5</text><text x="58.8 66.8 70.8" y="0" transform="translate(0,140.8) scale(1,0.94)">1.0</text><text x="58.8 66.8 70.8" y="0" transform="translate(0,206.0) scale(1,0.94)">0.5</text><text x="58.8 66.8 70.8" y="0" transform="translate(0,271.4) scale(1,0.94)">0.0</text><text x="47.8 58.8 66.8 70.8" y="0" transform="translate(0,336.7) scale(1,0.94)">−0.5</text><text x="47.8 58.8 66.8 70.8" y="0" transform="translate(0,402.0) scale(1,0.94)">−1.0</text><text x="47.8 58.8 66.8 70.8" y="0" transform="translate(0,467.2) scale(1,0.94)">−1.5</text></g>
<g><text x="79.8" y="0" transform="translate(0,477.8) scale(1,0.94)">0</text><text x="171.0 179.0 188.0" y="0" transform="translate(0,477.8) scale(1,0.94)">200</text><text x="272.0 280.0 289.0" y="0" transform="translate(0,477.8) scale(1,0.94)">400</text><text x="373.0 381.0 390.0" y="0" transform="translate(0,477.8) scale(1,0.94)">600</text><text x="473.0 481.0 490.0" y="0" transform="translate(0,477.8) scale(1,0.94)">800</text><text x="570.0 578.0 587.0 595.0" y="0" transform="translate(0,477.8) scale(1,0.94)">1000</text></g>
<text x="304.4" y="14.7" style="font-size:11px;fill:#161616;filter:drop-shadow(0px 1px 0px #f6f5f4)" textLength="44" lengthAdjust="spacing">Figure 1</text>
<!-- titlebar buttons -->
<g id="tb">
<circle cx="36.5" cy="11.3" r="7.3" fill="#eceae8"/><circle cx="36.5" cy="10.5" r="7" fill="url(#bg1)" stroke="url(#bg2)" stroke-width="1"/>
<rect x="36" y="10" width="1" height="1" fill="#111"/><rect x="36" y="11" width="1" height="1" fill="#fff"/>
<circle cx="593.5" cy="11.3" r="7.3" fill="#eceae8"/><circle cx="593.5" cy="10.5" r="7" fill="url(#bg1)" stroke="url(#bg2)" stroke-width="1"/>
<circle cx="616.5" cy="11.3" r="7.3" fill="#eceae8"/><circle cx="616.5" cy="10.5" r="7" fill="url(#bg1)" stroke="url(#bg2)" stroke-width="1"/>
<circle cx="639.5" cy="11.3" r="7.3" fill="#eceae8"/><circle cx="639.5" cy="10.5" r="7" fill="url(#bg1)" stroke="url(#bg2)" stroke-width="1"/>
<g fill="none" stroke="#1c1c1c" stroke-width="1.35" stroke-linecap="round" stroke-linejoin="round">
<path d="M590.8 9.4l2.7 2.7l2.7-2.7"/>
<path d="M613.8 11.5l2.7-2.7l2.7 2.7"/>
<path d="M636.9 7.9l5.2 5.2M642.1 7.9l-5.2 5.2"/>
</g>
</g>

<!-- app icon -->
<rect x="6.5" y="3.5" width="15" height="15" fill="#c6dde6" stroke="#9fb1b9" stroke-width="1"/>
<path fill="none" stroke="#d68a17" stroke-width="1.6" stroke-linejoin="round" stroke-linecap="round" d="M7.4 11.4C8 9 8.5 4.9 9.4 4.9C10.6 4.9 11.2 16.9 12.5 16.9C13.8 16.9 14.2 4.9 15.4 4.9C16.6 4.9 17.2 16.9 18.5 16.9C19.4 16.9 19.9 12.3 20.5 10.4"/>
<defs>
<linearGradient id="wall" x1="0" y1="0" x2="1" y2="0"><stop offset="0" stop-color="#a9b9b9"/><stop offset="0.28" stop-color="#ffffff"/><stop offset="0.72" stop-color="#ffffff"/><stop offset="1" stop-color="#bccaca"/></linearGradient>
<linearGradient id="door" x1="0" y1="0" x2="1" y2="1"><stop offset="0" stop-color="#fbd86a"/><stop offset="1" stop-color="#f0a52c"/></linearGradient>
<radialGradient id="ball" cx="0.36" cy="0.3" r="0.75"><stop offset="0" stop-color="#5ff0f6"/><stop offset="0.18" stop-color="#2fb2c8"/><stop offset="0.55" stop-color="#1a90ae"/><stop offset="0.9" stop-color="#0f7592"/><stop offset="1" stop-color="#0c5f7a"/></radialGradient>
<linearGradient id="subblue" x1="0" y1="0" x2="1" y2="1"><stop offset="0" stop-color="#4a92de"/><stop offset="0.6" stop-color="#a9d2f4"/><stop offset="1" stop-color="#def1fc"/></linearGradient>
<linearGradient id="subgh" x1="0" y1="0" x2="1" y2="0"><stop offset="0" stop-color="#8e8e8e"/><stop offset="0.75" stop-color="#c9c9c9"/><stop offset="1" stop-color="#fff"/></linearGradient>
<linearGradient id="subgv" x1="0" y1="0" x2="0" y2="1"><stop offset="0" stop-color="#8e8e8e"/><stop offset="0.75" stop-color="#d0d0d0"/><stop offset="1" stop-color="#fff"/></linearGradient>
<linearGradient id="subgray" x1="0" y1="0" x2="1" y2="1"><stop offset="0" stop-color="#a8a8a8"/><stop offset="0.32" stop-color="#ffffff"/></linearGradient>
<linearGradient id="lbl" x1="0" y1="0" x2="1" y2="1"><stop offset="0" stop-color="#b4cfe0"/><stop offset="1" stop-color="#7299b3"/></linearGradient>
<linearGradient id="shut" x1="0" y1="0" x2="1" y2="0"><stop offset="0" stop-color="#c9d3da"/><stop offset="1" stop-color="#8a9aa6"/></linearGradient>
<linearGradient id="handle" x1="0" y1="0" x2="0" y2="1"><stop offset="0" stop-color="#fcd894"/><stop offset="1" stop-color="#efa544"/></linearGradient>
<radialGradient id="grn" cx="0.5" cy="0.5" r="0.6"><stop offset="0" stop-color="#8af09a"/><stop offset="1" stop-color="#22b636"/></radialGradient>
</defs>
<!-- home -->
<g transform="translate(5,516)">
<path d="M7.6 13.5L14.5 7.2L20.4 13.5V25.2H7.6z" fill="url(#wall)" stroke="#87a0a0" stroke-width="1"/>
<path d="M7.2 25.4H20.8" stroke="#3f8484" stroke-width="1" fill="none"/>
<rect x="7.9" y="4.7" width="2.6" height="5.5" fill="#f6b838" stroke="#9c4545" stroke-width="0.9"/>
<path d="M14.5 3.1L24.9 13.5L22.6 15.8L14.5 7.8L4.7 16.8L3 14.7z" fill="#c12f4f" stroke="#861a31" stroke-width="0.6" stroke-linejoin="round"/>
<path d="M10.8 24.6V15.4Q10.8 13.8 12.4 13.8H15.6Q17.2 13.8 17.2 15.4V24.6z" fill="url(#door)" stroke="#a5532f" stroke-width="0.9"/>
</g>
<!-- back -->
<g transform="translate(35,516)">
<circle cx="14" cy="14.5" r="10" fill="url(#ball)" stroke="#0f6884" stroke-width="0.8"/>
<path d="M7.9 14.5L15 8.5V12.3H19.8V16.6H15V20.5z" fill="#cde9ef"/>
</g>
<!-- forward -->
<g transform="translate(65,516)">
<circle cx="14" cy="14.5" r="10" fill="url(#ball)" stroke="#0f6884" stroke-width="0.8"/>
<path d="M21.1 14.5L14 8.5V12.3H9.2V16.6H14V20.5z" fill="#cde9ef"/>
</g>
<!-- move -->
<g transform="translate(95,516)" fill="#176a8e">
<path d="M13.5 2.7L17 7.6H14.9V12.6H20.2V10.9L25 14L20.2 17.1V15.4H14.9V20.4H17L13.5 25.3L10 20.4H12.1V15.4H6.9V17.1L2 14L6.9 10.9V12.6H12.1V7.6H10z" stroke="#176a8e" stroke-width="0.3" stroke-linejoin="round"/>
</g>
<!-- zoom -->
<g transform="translate(125,516)">
<rect x="6.5" y="11.5" width="17" height="12" fill="#fff" stroke="#74bcc8" stroke-width="1"/>
<circle cx="10.4" cy="14.85" r="7.2" fill="#9cc4d2" fill-opacity="0.75" stroke="#b4d2e2" stroke-width="0.9"/>
<rect x="7.5" y="12.5" width="8" height="8.7" fill="#eef8fb" fill-opacity="0.7"/>
<path d="M9.1 14.5H15.2M9.1 16.5H15.2" stroke="#2f7f99" stroke-width="1" fill="none"/>
<path d="M9.1 19H15.2" stroke="#4a98ae" stroke-width="1.9" fill="none"/>
<g transform="rotate(-25.5 16.5 10.3)"><rect x="16" y="8.9" width="10.5" height="3" rx="1" fill="url(#handle)" stroke="#cf8a30" stroke-width="0.7"/><path d="M18 9.2v1M20 9.2v1M22 9.2v1M24 9.2v1" stroke="#e09a3c" stroke-width="0.6"/></g>
</g>
<!-- subplots -->
<g transform="translate(155,516)">
<rect x="2" y="2" width="24" height="24" fill="#fff"/>
<rect x="6" y="6" width="17" height="2.6" fill="url(#subgh)"/>
<rect x="6" y="6" width="2.4" height="17" fill="url(#subgv)"/>
<rect x="8.2" y="8.7" width="13.8" height="12.5" fill="url(#subblue)"/>
<rect x="5.5" y="5.5" width="18" height="18" rx="1.3" fill="none" stroke="#050505" stroke-width="1"/>
<rect x="10.55" y="11.15" width="8.9" height="7.1" rx="1.6" fill="#fff" stroke="#050505" stroke-width="1.1"/>
<rect x="11.3" y="11.8" width="2.3" height="2.3" fill="#8a8a8a"/><rect x="13.8" y="11.8" width="2.2" height="2.3" fill="#5f80d4"/><rect x="16.3" y="11.8" width="2.4" height="2.3" fill="#8a8a8a"/>
<g fill="url(#grn)" stroke="#25b23a" stroke-width="0.5" stroke-linejoin="round">
<path d="M14.2 4.5L16.9 8H11.5z"/><path d="M14.2 24.3L16.9 20.7H11.5z"/>
<path d="M4.5 14.1L8 11.4V16.8z"/><path d="M25.2 14.2L21.7 11.5V16.9z"/>
</g>
</g>
<!-- save -->
<g transform="translate(185,516)">
<rect x="2" y="2" width="24" height="24" fill="#fff"/>
<rect x="2" y="2.8" width="24" height="23.4" rx="1.6" fill="#0d4872"/>
<rect x="5.8" y="4.1" width="16" height="8.6" fill="url(#lbl)"/>
<rect x="5.8" y="4.1" width="16" height="1.5" fill="#cf7a34"/>
<path d="M10.2 8.4H20M10.2 10.7H20" stroke="#123a5c" stroke-width="1.1" fill="none"/>
<circle cx="4.1" cy="6.3" r="0.8" fill="#fff"/><circle cx="23.4" cy="6.3" r="0.8" fill="#fff"/>
<rect x="8.6" y="18.3" width="11" height="6.6" fill="url(#shut)"/>
<rect x="10.9" y="19" width="1.8" height="5" fill="#10193a"/>
</g>
<!-- corners (desktop showing) -->
<g fill="#8fd3f7">
<path d="M0 0h3Q0.6 0.6 0 3z"/><path d="M654 0h-3Q653.4 0.6 654 3z"/><path d="M0 551v-4.5Q0.8 550.2 4.5 551z"/><path d="M654 551v-4.5Q653.2 550.2 649.5 551z"/>
</g>
<!-- cursor -->
<path d="M489 11.2V26.3L492.3 23.1L494.7 28.5L497.2 27.3L494.8 22H498.9z" fill="#0c0c0c" stroke="#fff" stroke-width="2" paint-order="stroke" stroke-linejoin="miter"/>
</svg>
</body></html>
